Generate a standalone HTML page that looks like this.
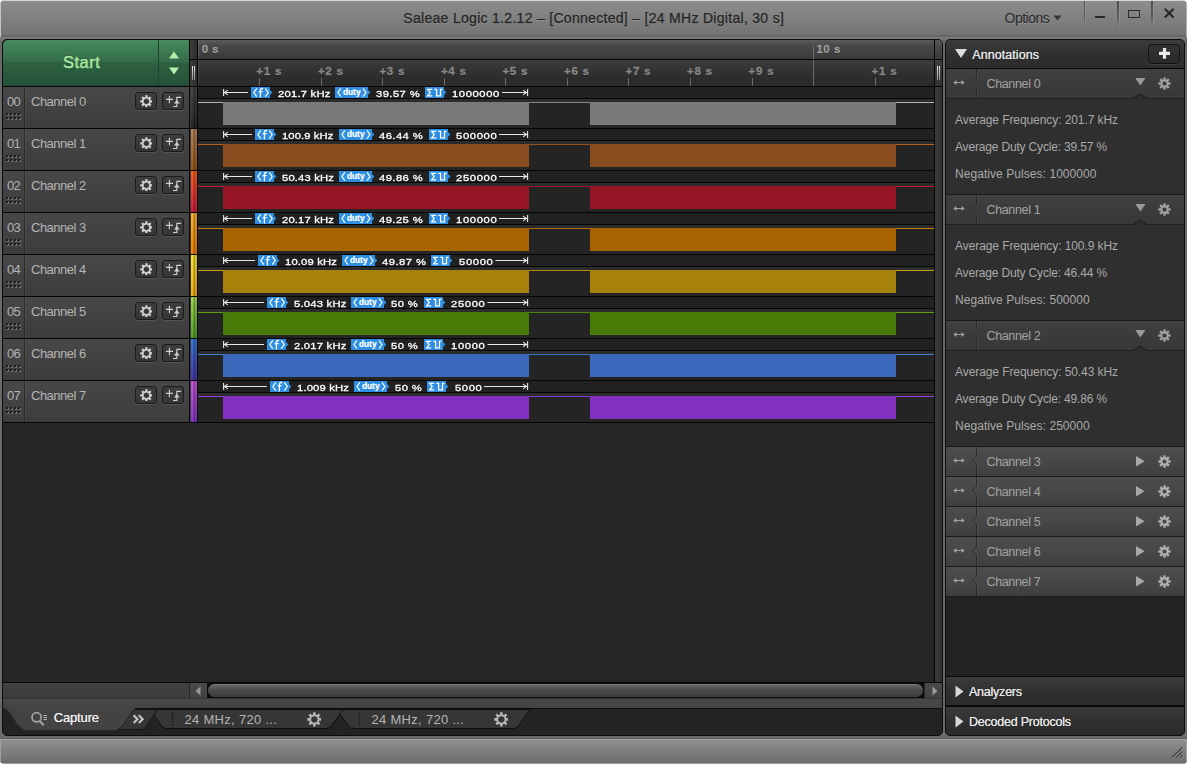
<!DOCTYPE html>
<html><head><meta charset="utf-8"><title>Saleae Logic</title>
<style>
*{box-sizing:border-box;margin:0;padding:0}
html,body{width:1187px;height:764px;overflow:hidden;background:#fff;font-family:"Liberation Sans",sans-serif;}
#win{position:absolute;left:0;top:0;width:1187px;height:764px;border-radius:5px 5px 4px 4px;overflow:hidden;
 background:linear-gradient(#8f8f8f 0px,#8c8c8c 2px,#747474 35px,#585858 36px,#787878 37px,#787878 39px,#6a6a6a 40px,#6a6a6a 737.5px,#5e5e5e 738px,#5e5e5e 739px,#a4a4a4 739px,#a4a4a4 740px,#8f8f8f 740px,#6e6e6e 762.5px,#9c9c9c 763px,#9c9c9c 764px);}
.abs,.t{position:absolute}
.t{white-space:nowrap;line-height:1}
#edgeL{left:0;top:3px;width:1px;height:34px;background:#c6c6c6}
#edgeL2{left:0;top:739px;width:1px;height:22px;background:#a0a0a0}
#edgeR2{left:1186px;top:739px;width:1px;height:22px;background:#a0a0a0}
#edgeR{left:1186px;top:3px;width:1px;height:34px;background:#b0b0b0}
#edgeT{left:3px;top:0;width:1181px;height:1px;background:#d6d6d6}
/* title */
.title{color:#242424;font-size:14px;-webkit-text-stroke:.25px #242424;text-shadow:0 1px 0 rgba(255,255,255,.18)}
.opt{color:#2a2a2a;font-size:14px;text-shadow:0 1px 0 rgba(255,255,255,.18)}
.tsep{top:1px;width:1.3px;height:26px;background:linear-gradient(rgba(70,70,70,.95),rgba(70,70,70,.6) 60%,rgba(70,70,70,0));box-shadow:1px 0 0 rgba(255,255,255,.10)}
/* main panel */
#main{left:2px;top:39px;width:941px;height:697px;background:#262626;border:1px solid #0c0c0c;border-radius:5px;overflow:hidden}
#side{left:945px;top:39px;width:240px;height:697px;background:#232323;border:1px solid #0c0c0c;border-radius:5px;overflow:hidden}

.tabt{color:#b4b4b4;font-size:13px}
.capt{color:#ededed;font-size:13px;text-shadow:0 0 .5px #ededed}
/* ---- main panel ---- */
#start{left:0;top:0;width:155px;height:46px;background:linear-gradient(#4a9163 0px,#458a5d 1px,#3c7a51 12px,#33694a 22px,#2d5f40 23px,#2a5a3c 34px,#25523a 45px,#1d3f2c 46px);border-radius:5px 0 0 0}
#start2{left:156px;top:0;width:30px;height:46px;background:linear-gradient(#4a9163 0px,#458a5d 1px,#3c7a51 12px,#33694a 22px,#2d5f40 23px,#2a5a3c 34px,#25523a 45px,#1d3f2c 46px)}
#startsep{left:155px;top:0;width:1px;height:46px;background:#1f4530}
.startt{color:#a9e8a2;font-size:16.5px;-webkit-text-stroke:.45px #a9e8a2;text-shadow:0 -1px 0 rgba(0,0,0,.35)}
.blk{background:#050505}
#gut{left:187px;top:0;width:7px;height:383px;background:linear-gradient(90deg,#3d3d3d,#2c2c2c)}
#hdr1{left:195px;top:0;width:736px;height:19px;background:linear-gradient(#5c5c5c,#484848 30%,#3a3a3a)}
#hdr2{left:195px;top:20px;width:736px;height:26px;background:linear-gradient(#3c3c3c,#2e2e2e 60%,#2a2a2a)}
.hl{border-left:1px solid rgba(255,255,255,.13)}
.tk1{color:#9e9e9e;font-size:11.5px;-webkit-text-stroke:.3px #9e9e9e;font-weight:bold;text-shadow:0 1px 0 rgba(0,0,0,.5)}
.tk2{color:#888;font-size:11.5px;-webkit-text-stroke:.3px #888;font-weight:bold;text-shadow:0 1px 0 rgba(0,0,0,.5)}
.tick{width:1px;background:#6a6a6a}
#rgut{left:932px;top:0;width:8px;height:643px;background:linear-gradient(90deg,#3a3a3a,#2f2f2f)}
.row{left:0;width:186px;height:41px;background:linear-gradient(#484848,#434343 40%,#3c3c3c)}
.num{color:#b2b2b2;font-size:13px}
.chn{color:#b4b4b4;font-size:13px}
.btn{width:21.5px;height:17.3px;background:linear-gradient(#3d3d3d,#353535);border:1px solid #1b1b1b;border-radius:3px;box-shadow:0 1px 0 rgba(255,255,255,.10)}
.ann{left:195px;width:736px;height:11px;background:#212121}
.wav{left:195px;width:736px;height:29px;background:linear-gradient(#2c2c2c 0,#2c2c2c 3px,#242424 3px)}
.at{color:#fff;font-size:9.7px;-webkit-text-stroke:.3px #fff}
.tag{height:11px;background:#2f8fe2}

/* ---- side panel ---- */
.shdr{left:0;width:238px;background:linear-gradient(#3b3b3b,#303030 50%,#2b2b2b)}
.sh{color:#e6e6e6;font-size:12.5px;text-shadow:0 0 .25px #e6e6e6}
.crow{left:0;width:238px;height:29px;background:linear-gradient(#404040,#3b3b3b 50%,#383838)}
.crow2{left:0;width:238px;height:29px;background:linear-gradient(#4d4d4d,#474747 50%,#3f3f3f)}
.cn{color:#a3a3a3;font-size:12.5px}
.cbody{left:0;width:238px;height:96px;background:#2f2f2f}
.ct{color:#a9a9a9;font-size:12px}
#plus{left:201.8px;top:3.5px;width:31.8px;height:20px;background:linear-gradient(#323232,#292929);border:1px solid #141414;border-radius:4px;box-shadow:0 1px 0 rgba(255,255,255,.09)}
</style></head>
<body>
<div id="win">
<div class="abs" id="edgeT"></div><div class="abs" id="edgeL"></div><div class="abs" id="edgeL2"></div><div class="abs" id="edgeR"></div><div class="abs" id="edgeR2"></div>
<span class="t title" style="left:403.3px;top:11px;letter-spacing:0.3px;">Saleae Logic 1.2.12 – [Connected] – [24 MHz Digital, 30 s]</span>
<span class="t opt" style="left:1004.5px;top:10.7px;letter-spacing:-0.51px;">Options</span>
<svg class="abs" style="left:1053px;top:15px" width="10" height="6"><path d="M0.5 0.5h8l-4 5z" fill="#333"/></svg>
<div class="abs tsep" style="left:1083.5px"></div>
<div class="abs tsep" style="left:1117.3px"></div>
<div class="abs tsep" style="left:1151.3px"></div>
<div class="abs" style="left:1095px;top:15.8px;width:10.1px;height:2.3px;background:#282828"></div>
<div class="abs" style="left:1128px;top:9.9px;width:12.1px;height:8.2px;border:1.5px solid #2a2a2a"></div>
<svg class="abs" style="left:1163px;top:7px" width="13" height="13"><path d="M1.8 1.7l8.8 8.8M10.6 1.7l-8.8 8.8" stroke="#262626" stroke-width="2" stroke-linecap="butt"/></svg>
<div class="abs" id="main">
<div class="abs" id="start"></div><div class="abs" id="startsep"></div><div class="abs" id="start2"></div>
<span class="t startt" style="left:60px;top:14px;letter-spacing:0.49px;">Start</span>
<svg class="abs" style="left:165px;top:11px" width="12" height="24"><path d="M6 0.5L11 7.5H1z M6 23.5L11 16.5H1z" fill="#b4eeae"/></svg>
<div class="abs blk" style="left:186px;top:0px;width:1.8px;height:383px;"></div>
<div class="abs" id="gut"></div>
<div class="abs blk" style="left:194px;top:0px;width:1px;height:383px;"></div>
<div class="abs" id="hdr1"></div><div class="abs" id="hdr2"></div>
<div class="abs blk" style="left:186px;top:19px;width:754px;height:1px;"></div>
<div class="abs blk" style="left:0px;top:46px;width:940px;height:1px;"></div>
<div class="abs " style="left:195px;top:0px;width:1px;height:19px;background:rgba(255,255,255,.12)"></div>
<div class="abs " style="left:195px;top:20px;width:1px;height:25px;background:rgba(255,255,255,.10)"></div>
<span class="t tk1" style="left:198.7px;top:3.700000000000003px;letter-spacing:0.42px;">0 s</span>
<span class="t tk1" style="left:813.5px;top:3.700000000000003px;letter-spacing:0.47px;">10 s</span>
<div class="abs " style="left:810px;top:2px;width:1.1px;height:17px;background:linear-gradient(rgba(112,112,112,0),#707070 50%)"></div>
<div class="abs " style="left:810px;top:20px;width:1.1px;height:26px;background:#6a6a6a"></div>
<div class="abs tick" style="left:256.2px;top:38px;width:1px;height:7.6px;"></div>
<span class="t tk2" style="left:253.3px;top:25.700000000000003px;letter-spacing:0.76px;">+1 s</span>
<div class="abs tick" style="left:317.8px;top:38px;width:1px;height:7.6px;"></div>
<span class="t tk2" style="left:314.9px;top:25.700000000000003px;letter-spacing:0.76px;">+2 s</span>
<div class="abs tick" style="left:379.3px;top:38px;width:1px;height:7.6px;"></div>
<span class="t tk2" style="left:376.4px;top:25.700000000000003px;letter-spacing:0.76px;">+3 s</span>
<div class="abs tick" style="left:440.8px;top:38px;width:1px;height:7.6px;"></div>
<span class="t tk2" style="left:437.9px;top:25.700000000000003px;letter-spacing:0.76px;">+4 s</span>
<div class="abs tick" style="left:502.3px;top:38px;width:1px;height:7.6px;"></div>
<span class="t tk2" style="left:499.4px;top:25.700000000000003px;letter-spacing:0.76px;">+5 s</span>
<div class="abs tick" style="left:563.9px;top:38px;width:1px;height:7.6px;"></div>
<span class="t tk2" style="left:561.0px;top:25.700000000000003px;letter-spacing:0.76px;">+6 s</span>
<div class="abs tick" style="left:625.4px;top:38px;width:1px;height:7.6px;"></div>
<span class="t tk2" style="left:622.5px;top:25.700000000000003px;letter-spacing:0.76px;">+7 s</span>
<div class="abs tick" style="left:686.9px;top:38px;width:1px;height:7.6px;"></div>
<span class="t tk2" style="left:684.0px;top:25.700000000000003px;letter-spacing:0.76px;">+8 s</span>
<div class="abs tick" style="left:748.5px;top:38px;width:1px;height:7.6px;"></div>
<span class="t tk2" style="left:745.6px;top:25.700000000000003px;letter-spacing:0.76px;">+9 s</span>
<div class="abs tick" style="left:871.5px;top:38px;width:1px;height:7.6px;"></div>
<span class="t tk2" style="left:868.6px;top:25.700000000000003px;letter-spacing:0.76px;">+1 s</span>
<div class="abs " style="left:189px;top:26px;width:1px;height:14px;background:linear-gradient(#e8e8e8,#8a8a8a)"></div>
<div class="abs " style="left:191px;top:26px;width:1px;height:14px;background:linear-gradient(#e8e8e8,#8a8a8a)"></div>
<div class="abs " style="left:934px;top:26px;width:1px;height:14px;background:linear-gradient(#e8e8e8,#8a8a8a)"></div>
<div class="abs " style="left:936px;top:26px;width:1px;height:14px;background:linear-gradient(#e8e8e8,#8a8a8a)"></div>
<div class="abs blk" style="left:931px;top:0px;width:1px;height:643px;"></div>
<div class="abs" id="rgut"></div>
<div class="abs " style="left:932px;top:0px;width:8px;height:19px;background:linear-gradient(#565656,#383838)"></div>
<div class="abs " style="left:932px;top:20px;width:8px;height:26px;background:linear-gradient(#3e3e3e,#323232)"></div>
<div class="abs blk" style="left:931px;top:19px;width:9px;height:1px;"></div>
<div class="abs blk" style="left:931px;top:46px;width:9px;height:1px;"></div>
<div class="abs " style="left:934px;top:26px;width:1px;height:14px;background:linear-gradient(#e8e8e8,#8a8a8a)"></div>
<div class="abs " style="left:936px;top:26px;width:1px;height:14px;background:linear-gradient(#e8e8e8,#8a8a8a)"></div>
<div class="abs blk" style="left:0px;top:46px;width:186px;height:1px;"></div>
<div class="abs blk" style="left:186px;top:45.8px;width:745px;height:1.6px;"></div>
<div class="abs row" style="top:47px"></div>
<div class="abs " style="left:21px;top:47px;width:1px;height:41px;background:#2b2b2b"></div>
<div class="abs " style="left:22px;top:47px;width:1px;height:41px;background:rgba(255,255,255,.05)"></div>
<span class="t num" style="left:4px;top:55.3px;letter-spacing:-0.69px;">00</span>
<div class="abs " style="left:3px;top:73px;width:1.8px;height:1.8px;background:#1e1e1e;box-shadow:1px 1px 0 #747474"></div>
<div class="abs " style="left:7px;top:73px;width:1.8px;height:1.8px;background:#1e1e1e;box-shadow:1px 1px 0 #747474"></div>
<div class="abs " style="left:11px;top:73px;width:1.8px;height:1.8px;background:#1e1e1e;box-shadow:1px 1px 0 #747474"></div>
<div class="abs " style="left:15px;top:73px;width:1.8px;height:1.8px;background:#1e1e1e;box-shadow:1px 1px 0 #747474"></div>
<div class="abs " style="left:3px;top:77px;width:1.8px;height:1.8px;background:#1e1e1e;box-shadow:1px 1px 0 #747474"></div>
<div class="abs " style="left:7px;top:77px;width:1.8px;height:1.8px;background:#1e1e1e;box-shadow:1px 1px 0 #747474"></div>
<div class="abs " style="left:11px;top:77px;width:1.8px;height:1.8px;background:#1e1e1e;box-shadow:1px 1px 0 #747474"></div>
<div class="abs " style="left:15px;top:77px;width:1.8px;height:1.8px;background:#1e1e1e;box-shadow:1px 1px 0 #747474"></div>
<span class="t chn" style="left:28px;top:55.3px;letter-spacing:-0.51px;">Channel 0</span>
<div class="abs btn" style="left:132.1px;top:52.3px"></div>
<div class="abs btn" style="left:159.1px;top:52.3px"></div>
<svg class="abs" style="left:136.66px;top:54.61px" width="12.78" height="12.78" viewBox="-8 -8 16 16"><g fill="#d2d2d2"><rect x="-1.4" y="-7.7" width="2.8" height="3.4" rx=".3" transform="rotate(0)"/><rect x="-1.4" y="-7.7" width="2.8" height="3.4" rx=".3" transform="rotate(45)"/><rect x="-1.4" y="-7.7" width="2.8" height="3.4" rx=".3" transform="rotate(90)"/><rect x="-1.4" y="-7.7" width="2.8" height="3.4" rx=".3" transform="rotate(135)"/><rect x="-1.4" y="-7.7" width="2.8" height="3.4" rx=".3" transform="rotate(180)"/><rect x="-1.4" y="-7.7" width="2.8" height="3.4" rx=".3" transform="rotate(225)"/><rect x="-1.4" y="-7.7" width="2.8" height="3.4" rx=".3" transform="rotate(270)"/><rect x="-1.4" y="-7.7" width="2.8" height="3.4" rx=".3" transform="rotate(315)"/></g><circle r="4.55" fill="none" stroke="#d2d2d2" stroke-width="2.05"/></svg>
<svg class="abs" style="left:160px;top:52px" width="21" height="17" viewBox="163 6 21 17"><path d="M165.9 13.4h7.1M169.4 9.8v7.4" stroke="#d0d0d0" stroke-width="1.12" fill="none"/><path d="M173 20.5h3.8v-9.1h4.3" stroke="#d0d0d0" stroke-width="1.12" fill="none"/><path d="M173.8 17.4l3-3.5 3 3.5z" fill="#d0d0d0"/></svg>
<div class="abs " style="left:187.8px;top:47px;width:6.4px;height:41px;background:linear-gradient(90deg,rgba(0,0,0,0) 38%,rgba(0,0,0,.38) 46%,rgba(0,0,0,.38) 56%,rgba(0,0,0,.14) 64%),linear-gradient(#484848,#262626)"></div>
<div class="abs ann" style="top:47px"></div>
<div class="abs wav" style="top:59px"></div>
<div class="abs blk" style="left:195px;top:57.8px;width:736px;height:1.4px;"></div>
<div class="abs " style="left:195px;top:62px;width:25px;height:1.1px;background:#b0b0b0"></div>
<div class="abs " style="left:526px;top:62px;width:61px;height:1.1px;background:#7a7a7a;filter:brightness(1.07)"></div>
<div class="abs " style="left:893px;top:62px;width:38px;height:1.1px;background:#b0b0b0"></div>
<div class="abs " style="left:220px;top:62px;width:306px;height:23px;background:#7a7a7a"></div>
<div class="abs " style="left:587px;top:62px;width:306px;height:23px;background:#7a7a7a"></div>
<svg class="abs" style="left:195px;top:47px" width="736" height="12"><path d="M25.6 2v7M26 5.5H50M29.8 3.1L26.5 5.5l3.3 2.4" stroke="#e8e8e8" stroke-width="1.1" fill="none"/><path d="M329.6 2v7M329 5.5H304.0M325.2 3.1L328.5 5.5l-3.3 2.4" stroke="#e8e8e8" stroke-width="1.1" fill="none"/></svg>
<svg class="abs" style="left:248px;top:47.0px" width="22" height="10.9" viewBox="0 0 22 11" preserveAspectRatio="none"><path d="M0 0H19V3L21.4 5.5L19 8V11H0z" fill="#2f8fe2"/><path d="M5.8 1.4L2.8 5.6L5.8 9.8M14.3 1.4L17.3 5.6L14.3 9.8" stroke="#fff" stroke-width="1.15" fill="none"/><path d="M9.4 10.6V3.4q0-1.9 1.7-1.9h1M7.7 4.6h3.9" stroke="#fff" stroke-width="1.3" fill="none"/></svg>
<svg class="abs" style="left:332px;top:47.0px" width="36" height="10.9" viewBox="0 0 36 11" preserveAspectRatio="none"><path d="M0 0H33V3L35.4 5.5L33 8V11H0z" fill="#2f8fe2"/><path d="M5.9 1.4L2.9 5.6L5.9 9.8M28 1.4L31 5.6L28 9.8" stroke="#fff" stroke-width="1.15" fill="none"/><text x="8" y="8.5" font-family="Liberation Sans"  font-size="9.2" font-weight="bold" fill="#fff" stroke="#fff" stroke-width=".25" textLength="17.5" lengthAdjust="spacingAndGlyphs">duty</text></svg>
<svg class="abs" style="left:422.0px;top:47.0px" width="22" height="10.9" viewBox="0 0 22 11" preserveAspectRatio="none"><path d="M0 0H19V3L21.4 5.5L19 8V11H0z" fill="#2f8fe2"/><path d="M7.2 2.3H2.7L5.2 5.6L2.7 8.9H7.2" stroke="#fff" stroke-width="1.3" fill="none"/><path d="M9.3 2.3h2.3v6.6h3.9V2.3h2" stroke="#fff" stroke-width="1.3" fill="none"/></svg>
<span class="t at" style="left:274.5px;top:49.099999999999994px;letter-spacing:0.19px;transform:scaleX(1.16);transform-origin:0 0;">201.7 kHz</span>
<span class="t at" style="left:372.5px;top:49.099999999999994px;letter-spacing:0.37px;transform:scaleX(1.16);transform-origin:0 0;">39.57 %</span>
<span class="t at" style="left:449px;top:49.099999999999994px;letter-spacing:0.5px;transform:scaleX(1.16);transform-origin:0 0;">1000000</span>
<div class="abs blk" style="left:0px;top:88px;width:186px;height:1px;"></div>
<div class="abs blk" style="left:186px;top:87.8px;width:745px;height:1.6px;"></div>
<div class="abs row" style="top:89px"></div>
<div class="abs " style="left:21px;top:89px;width:1px;height:41px;background:#2b2b2b"></div>
<div class="abs " style="left:22px;top:89px;width:1px;height:41px;background:rgba(255,255,255,.05)"></div>
<span class="t num" style="left:4px;top:97.30000000000001px;letter-spacing:-0.69px;">01</span>
<div class="abs " style="left:3px;top:115px;width:1.8px;height:1.8px;background:#1e1e1e;box-shadow:1px 1px 0 #747474"></div>
<div class="abs " style="left:7px;top:115px;width:1.8px;height:1.8px;background:#1e1e1e;box-shadow:1px 1px 0 #747474"></div>
<div class="abs " style="left:11px;top:115px;width:1.8px;height:1.8px;background:#1e1e1e;box-shadow:1px 1px 0 #747474"></div>
<div class="abs " style="left:15px;top:115px;width:1.8px;height:1.8px;background:#1e1e1e;box-shadow:1px 1px 0 #747474"></div>
<div class="abs " style="left:3px;top:119px;width:1.8px;height:1.8px;background:#1e1e1e;box-shadow:1px 1px 0 #747474"></div>
<div class="abs " style="left:7px;top:119px;width:1.8px;height:1.8px;background:#1e1e1e;box-shadow:1px 1px 0 #747474"></div>
<div class="abs " style="left:11px;top:119px;width:1.8px;height:1.8px;background:#1e1e1e;box-shadow:1px 1px 0 #747474"></div>
<div class="abs " style="left:15px;top:119px;width:1.8px;height:1.8px;background:#1e1e1e;box-shadow:1px 1px 0 #747474"></div>
<span class="t chn" style="left:28px;top:97.30000000000001px;letter-spacing:-0.51px;">Channel 1</span>
<div class="abs btn" style="left:132.1px;top:94.30000000000001px"></div>
<div class="abs btn" style="left:159.1px;top:94.30000000000001px"></div>
<svg class="abs" style="left:136.66px;top:96.61px" width="12.78" height="12.78" viewBox="-8 -8 16 16"><g fill="#d2d2d2"><rect x="-1.4" y="-7.7" width="2.8" height="3.4" rx=".3" transform="rotate(0)"/><rect x="-1.4" y="-7.7" width="2.8" height="3.4" rx=".3" transform="rotate(45)"/><rect x="-1.4" y="-7.7" width="2.8" height="3.4" rx=".3" transform="rotate(90)"/><rect x="-1.4" y="-7.7" width="2.8" height="3.4" rx=".3" transform="rotate(135)"/><rect x="-1.4" y="-7.7" width="2.8" height="3.4" rx=".3" transform="rotate(180)"/><rect x="-1.4" y="-7.7" width="2.8" height="3.4" rx=".3" transform="rotate(225)"/><rect x="-1.4" y="-7.7" width="2.8" height="3.4" rx=".3" transform="rotate(270)"/><rect x="-1.4" y="-7.7" width="2.8" height="3.4" rx=".3" transform="rotate(315)"/></g><circle r="4.55" fill="none" stroke="#d2d2d2" stroke-width="2.05"/></svg>
<svg class="abs" style="left:160px;top:94px" width="21" height="17" viewBox="163 6 21 17"><path d="M165.9 13.4h7.1M169.4 9.8v7.4" stroke="#d0d0d0" stroke-width="1.12" fill="none"/><path d="M173 20.5h3.8v-9.1h4.3" stroke="#d0d0d0" stroke-width="1.12" fill="none"/><path d="M173.8 17.4l3-3.5 3 3.5z" fill="#d0d0d0"/></svg>
<div class="abs " style="left:187.8px;top:89px;width:6.4px;height:41px;background:linear-gradient(90deg,rgba(0,0,0,0) 38%,rgba(0,0,0,.38) 46%,rgba(0,0,0,.38) 56%,rgba(0,0,0,.14) 64%),linear-gradient(#b4845c,#9a5a18)"></div>
<div class="abs ann" style="top:89px"></div>
<div class="abs wav" style="top:101px"></div>
<div class="abs blk" style="left:195px;top:99.80000000000001px;width:736px;height:1.4px;"></div>
<div class="abs " style="left:195px;top:104px;width:25px;height:1.1px;background:#b8601c"></div>
<div class="abs " style="left:526px;top:104px;width:61px;height:1.1px;background:#894c1e;filter:brightness(1.07)"></div>
<div class="abs " style="left:893px;top:104px;width:38px;height:1.1px;background:#b8601c"></div>
<div class="abs " style="left:220px;top:104px;width:306px;height:23px;background:#894c1e"></div>
<div class="abs " style="left:587px;top:104px;width:306px;height:23px;background:#894c1e"></div>
<svg class="abs" style="left:195px;top:89px" width="736" height="12"><path d="M25.6 2v7M26 5.5H54M29.8 3.1L26.5 5.5l3.3 2.4" stroke="#e8e8e8" stroke-width="1.1" fill="none"/><path d="M329.6 2v7M329 5.5H301.0M325.2 3.1L328.5 5.5l-3.3 2.4" stroke="#e8e8e8" stroke-width="1.1" fill="none"/></svg>
<svg class="abs" style="left:252px;top:89.0px" width="22" height="10.9" viewBox="0 0 22 11" preserveAspectRatio="none"><path d="M0 0H19V3L21.4 5.5L19 8V11H0z" fill="#2f8fe2"/><path d="M5.8 1.4L2.8 5.6L5.8 9.8M14.3 1.4L17.3 5.6L14.3 9.8" stroke="#fff" stroke-width="1.15" fill="none"/><path d="M9.4 10.6V3.4q0-1.9 1.7-1.9h1M7.7 4.6h3.9" stroke="#fff" stroke-width="1.3" fill="none"/></svg>
<svg class="abs" style="left:336px;top:89.0px" width="36" height="10.9" viewBox="0 0 36 11" preserveAspectRatio="none"><path d="M0 0H33V3L35.4 5.5L33 8V11H0z" fill="#2f8fe2"/><path d="M5.9 1.4L2.9 5.6L5.9 9.8M28 1.4L31 5.6L28 9.8" stroke="#fff" stroke-width="1.15" fill="none"/><text x="8" y="8.5" font-family="Liberation Sans"  font-size="9.2" font-weight="bold" fill="#fff" stroke="#fff" stroke-width=".25" textLength="17.5" lengthAdjust="spacingAndGlyphs">duty</text></svg>
<svg class="abs" style="left:425.5px;top:89.0px" width="22" height="10.9" viewBox="0 0 22 11" preserveAspectRatio="none"><path d="M0 0H19V3L21.4 5.5L19 8V11H0z" fill="#2f8fe2"/><path d="M7.2 2.3H2.7L5.2 5.6L2.7 8.9H7.2" stroke="#fff" stroke-width="1.3" fill="none"/><path d="M9.3 2.3h2.3v6.6h3.9V2.3h2" stroke="#fff" stroke-width="1.3" fill="none"/></svg>
<span class="t at" style="left:279px;top:91.1px;letter-spacing:0.09px;transform:scaleX(1.16);transform-origin:0 0;">100.9 kHz</span>
<span class="t at" style="left:376px;top:91.1px;letter-spacing:0.37px;transform:scaleX(1.16);transform-origin:0 0;">46.44 %</span>
<span class="t at" style="left:452.5px;top:91.1px;letter-spacing:0.56px;transform:scaleX(1.16);transform-origin:0 0;">500000</span>
<div class="abs blk" style="left:0px;top:130px;width:186px;height:1px;"></div>
<div class="abs blk" style="left:186px;top:129.8px;width:745px;height:1.6px;"></div>
<div class="abs row" style="top:131px"></div>
<div class="abs " style="left:21px;top:131px;width:1px;height:41px;background:#2b2b2b"></div>
<div class="abs " style="left:22px;top:131px;width:1px;height:41px;background:rgba(255,255,255,.05)"></div>
<span class="t num" style="left:4px;top:139.3px;letter-spacing:-0.69px;">02</span>
<div class="abs " style="left:3px;top:157px;width:1.8px;height:1.8px;background:#1e1e1e;box-shadow:1px 1px 0 #747474"></div>
<div class="abs " style="left:7px;top:157px;width:1.8px;height:1.8px;background:#1e1e1e;box-shadow:1px 1px 0 #747474"></div>
<div class="abs " style="left:11px;top:157px;width:1.8px;height:1.8px;background:#1e1e1e;box-shadow:1px 1px 0 #747474"></div>
<div class="abs " style="left:15px;top:157px;width:1.8px;height:1.8px;background:#1e1e1e;box-shadow:1px 1px 0 #747474"></div>
<div class="abs " style="left:3px;top:161px;width:1.8px;height:1.8px;background:#1e1e1e;box-shadow:1px 1px 0 #747474"></div>
<div class="abs " style="left:7px;top:161px;width:1.8px;height:1.8px;background:#1e1e1e;box-shadow:1px 1px 0 #747474"></div>
<div class="abs " style="left:11px;top:161px;width:1.8px;height:1.8px;background:#1e1e1e;box-shadow:1px 1px 0 #747474"></div>
<div class="abs " style="left:15px;top:161px;width:1.8px;height:1.8px;background:#1e1e1e;box-shadow:1px 1px 0 #747474"></div>
<span class="t chn" style="left:28px;top:139.3px;letter-spacing:-0.51px;">Channel 2</span>
<div class="abs btn" style="left:132.1px;top:136.3px"></div>
<div class="abs btn" style="left:159.1px;top:136.3px"></div>
<svg class="abs" style="left:136.66px;top:138.61px" width="12.78" height="12.78" viewBox="-8 -8 16 16"><g fill="#d2d2d2"><rect x="-1.4" y="-7.7" width="2.8" height="3.4" rx=".3" transform="rotate(0)"/><rect x="-1.4" y="-7.7" width="2.8" height="3.4" rx=".3" transform="rotate(45)"/><rect x="-1.4" y="-7.7" width="2.8" height="3.4" rx=".3" transform="rotate(90)"/><rect x="-1.4" y="-7.7" width="2.8" height="3.4" rx=".3" transform="rotate(135)"/><rect x="-1.4" y="-7.7" width="2.8" height="3.4" rx=".3" transform="rotate(180)"/><rect x="-1.4" y="-7.7" width="2.8" height="3.4" rx=".3" transform="rotate(225)"/><rect x="-1.4" y="-7.7" width="2.8" height="3.4" rx=".3" transform="rotate(270)"/><rect x="-1.4" y="-7.7" width="2.8" height="3.4" rx=".3" transform="rotate(315)"/></g><circle r="4.55" fill="none" stroke="#d2d2d2" stroke-width="2.05"/></svg>
<svg class="abs" style="left:160px;top:136px" width="21" height="17" viewBox="163 6 21 17"><path d="M165.9 13.4h7.1M169.4 9.8v7.4" stroke="#d0d0d0" stroke-width="1.12" fill="none"/><path d="M173 20.5h3.8v-9.1h4.3" stroke="#d0d0d0" stroke-width="1.12" fill="none"/><path d="M173.8 17.4l3-3.5 3 3.5z" fill="#d0d0d0"/></svg>
<div class="abs " style="left:187.8px;top:131px;width:6.4px;height:41px;background:linear-gradient(90deg,rgba(0,0,0,0) 38%,rgba(0,0,0,.38) 46%,rgba(0,0,0,.38) 56%,rgba(0,0,0,.14) 64%),linear-gradient(#ff6220,#d21c40)"></div>
<div class="abs ann" style="top:131px"></div>
<div class="abs wav" style="top:143px"></div>
<div class="abs blk" style="left:195px;top:141.8px;width:736px;height:1.4px;"></div>
<div class="abs " style="left:195px;top:146px;width:25px;height:1.1px;background:#c41a30"></div>
<div class="abs " style="left:526px;top:146px;width:61px;height:1.1px;background:#981427;filter:brightness(1.07)"></div>
<div class="abs " style="left:893px;top:146px;width:38px;height:1.1px;background:#c41a30"></div>
<div class="abs " style="left:220px;top:146px;width:306px;height:23px;background:#981427"></div>
<div class="abs " style="left:587px;top:146px;width:306px;height:23px;background:#981427"></div>
<svg class="abs" style="left:195px;top:131px" width="736" height="12"><path d="M25.6 2v7M26 5.5H54M29.8 3.1L26.5 5.5l3.3 2.4" stroke="#e8e8e8" stroke-width="1.1" fill="none"/><path d="M329.6 2v7M329 5.5H301.0M325.2 3.1L328.5 5.5l-3.3 2.4" stroke="#e8e8e8" stroke-width="1.1" fill="none"/></svg>
<svg class="abs" style="left:252px;top:131.0px" width="22" height="10.9" viewBox="0 0 22 11" preserveAspectRatio="none"><path d="M0 0H19V3L21.4 5.5L19 8V11H0z" fill="#2f8fe2"/><path d="M5.8 1.4L2.8 5.6L5.8 9.8M14.3 1.4L17.3 5.6L14.3 9.8" stroke="#fff" stroke-width="1.15" fill="none"/><path d="M9.4 10.6V3.4q0-1.9 1.7-1.9h1M7.7 4.6h3.9" stroke="#fff" stroke-width="1.3" fill="none"/></svg>
<svg class="abs" style="left:336px;top:131.0px" width="36" height="10.9" viewBox="0 0 36 11" preserveAspectRatio="none"><path d="M0 0H33V3L35.4 5.5L33 8V11H0z" fill="#2f8fe2"/><path d="M5.9 1.4L2.9 5.6L5.9 9.8M28 1.4L31 5.6L28 9.8" stroke="#fff" stroke-width="1.15" fill="none"/><text x="8" y="8.5" font-family="Liberation Sans"  font-size="9.2" font-weight="bold" fill="#fff" stroke="#fff" stroke-width=".25" textLength="17.5" lengthAdjust="spacingAndGlyphs">duty</text></svg>
<svg class="abs" style="left:425.5px;top:131.0px" width="22" height="10.9" viewBox="0 0 22 11" preserveAspectRatio="none"><path d="M0 0H19V3L21.4 5.5L19 8V11H0z" fill="#2f8fe2"/><path d="M7.2 2.3H2.7L5.2 5.6L2.7 8.9H7.2" stroke="#fff" stroke-width="1.3" fill="none"/><path d="M9.3 2.3h2.3v6.6h3.9V2.3h2" stroke="#fff" stroke-width="1.3" fill="none"/></svg>
<span class="t at" style="left:278.5px;top:133.1px;letter-spacing:0.14px;transform:scaleX(1.16);transform-origin:0 0;">50.43 kHz</span>
<span class="t at" style="left:376px;top:133.1px;letter-spacing:0.37px;transform:scaleX(1.16);transform-origin:0 0;">49.86 %</span>
<span class="t at" style="left:452.5px;top:133.1px;letter-spacing:0.56px;transform:scaleX(1.16);transform-origin:0 0;">250000</span>
<div class="abs blk" style="left:0px;top:172px;width:186px;height:1px;"></div>
<div class="abs blk" style="left:186px;top:171.8px;width:745px;height:1.6px;"></div>
<div class="abs row" style="top:173px"></div>
<div class="abs " style="left:21px;top:173px;width:1px;height:41px;background:#2b2b2b"></div>
<div class="abs " style="left:22px;top:173px;width:1px;height:41px;background:rgba(255,255,255,.05)"></div>
<span class="t num" style="left:4px;top:181.3px;letter-spacing:-0.69px;">03</span>
<div class="abs " style="left:3px;top:199px;width:1.8px;height:1.8px;background:#1e1e1e;box-shadow:1px 1px 0 #747474"></div>
<div class="abs " style="left:7px;top:199px;width:1.8px;height:1.8px;background:#1e1e1e;box-shadow:1px 1px 0 #747474"></div>
<div class="abs " style="left:11px;top:199px;width:1.8px;height:1.8px;background:#1e1e1e;box-shadow:1px 1px 0 #747474"></div>
<div class="abs " style="left:15px;top:199px;width:1.8px;height:1.8px;background:#1e1e1e;box-shadow:1px 1px 0 #747474"></div>
<div class="abs " style="left:3px;top:203px;width:1.8px;height:1.8px;background:#1e1e1e;box-shadow:1px 1px 0 #747474"></div>
<div class="abs " style="left:7px;top:203px;width:1.8px;height:1.8px;background:#1e1e1e;box-shadow:1px 1px 0 #747474"></div>
<div class="abs " style="left:11px;top:203px;width:1.8px;height:1.8px;background:#1e1e1e;box-shadow:1px 1px 0 #747474"></div>
<div class="abs " style="left:15px;top:203px;width:1.8px;height:1.8px;background:#1e1e1e;box-shadow:1px 1px 0 #747474"></div>
<span class="t chn" style="left:28px;top:181.3px;letter-spacing:-0.51px;">Channel 3</span>
<div class="abs btn" style="left:132.1px;top:178.3px"></div>
<div class="abs btn" style="left:159.1px;top:178.3px"></div>
<svg class="abs" style="left:136.66px;top:180.61px" width="12.78" height="12.78" viewBox="-8 -8 16 16"><g fill="#d2d2d2"><rect x="-1.4" y="-7.7" width="2.8" height="3.4" rx=".3" transform="rotate(0)"/><rect x="-1.4" y="-7.7" width="2.8" height="3.4" rx=".3" transform="rotate(45)"/><rect x="-1.4" y="-7.7" width="2.8" height="3.4" rx=".3" transform="rotate(90)"/><rect x="-1.4" y="-7.7" width="2.8" height="3.4" rx=".3" transform="rotate(135)"/><rect x="-1.4" y="-7.7" width="2.8" height="3.4" rx=".3" transform="rotate(180)"/><rect x="-1.4" y="-7.7" width="2.8" height="3.4" rx=".3" transform="rotate(225)"/><rect x="-1.4" y="-7.7" width="2.8" height="3.4" rx=".3" transform="rotate(270)"/><rect x="-1.4" y="-7.7" width="2.8" height="3.4" rx=".3" transform="rotate(315)"/></g><circle r="4.55" fill="none" stroke="#d2d2d2" stroke-width="2.05"/></svg>
<svg class="abs" style="left:160px;top:178px" width="21" height="17" viewBox="163 6 21 17"><path d="M165.9 13.4h7.1M169.4 9.8v7.4" stroke="#d0d0d0" stroke-width="1.12" fill="none"/><path d="M173 20.5h3.8v-9.1h4.3" stroke="#d0d0d0" stroke-width="1.12" fill="none"/><path d="M173.8 17.4l3-3.5 3 3.5z" fill="#d0d0d0"/></svg>
<div class="abs " style="left:187.8px;top:173px;width:6.4px;height:41px;background:linear-gradient(90deg,rgba(0,0,0,0) 38%,rgba(0,0,0,.38) 46%,rgba(0,0,0,.38) 56%,rgba(0,0,0,.14) 64%),linear-gradient(#f8b430,#f08004)"></div>
<div class="abs ann" style="top:173px"></div>
<div class="abs wav" style="top:185px"></div>
<div class="abs blk" style="left:195px;top:183.8px;width:736px;height:1.4px;"></div>
<div class="abs " style="left:195px;top:188px;width:25px;height:1.1px;background:#c87c00"></div>
<div class="abs " style="left:526px;top:188px;width:61px;height:1.1px;background:#a86400;filter:brightness(1.07)"></div>
<div class="abs " style="left:893px;top:188px;width:38px;height:1.1px;background:#c87c00"></div>
<div class="abs " style="left:220px;top:188px;width:306px;height:23px;background:#a86400"></div>
<div class="abs " style="left:587px;top:188px;width:306px;height:23px;background:#a86400"></div>
<svg class="abs" style="left:195px;top:173px" width="736" height="12"><path d="M25.6 2v7M26 5.5H54M29.8 3.1L26.5 5.5l3.3 2.4" stroke="#e8e8e8" stroke-width="1.1" fill="none"/><path d="M329.6 2v7M329 5.5H301.0M325.2 3.1L328.5 5.5l-3.3 2.4" stroke="#e8e8e8" stroke-width="1.1" fill="none"/></svg>
<svg class="abs" style="left:252px;top:173.0px" width="22" height="10.9" viewBox="0 0 22 11" preserveAspectRatio="none"><path d="M0 0H19V3L21.4 5.5L19 8V11H0z" fill="#2f8fe2"/><path d="M5.8 1.4L2.8 5.6L5.8 9.8M14.3 1.4L17.3 5.6L14.3 9.8" stroke="#fff" stroke-width="1.15" fill="none"/><path d="M9.4 10.6V3.4q0-1.9 1.7-1.9h1M7.7 4.6h3.9" stroke="#fff" stroke-width="1.3" fill="none"/></svg>
<svg class="abs" style="left:336px;top:173.0px" width="36" height="10.9" viewBox="0 0 36 11" preserveAspectRatio="none"><path d="M0 0H33V3L35.4 5.5L33 8V11H0z" fill="#2f8fe2"/><path d="M5.9 1.4L2.9 5.6L5.9 9.8M28 1.4L31 5.6L28 9.8" stroke="#fff" stroke-width="1.15" fill="none"/><text x="8" y="8.5" font-family="Liberation Sans"  font-size="9.2" font-weight="bold" fill="#fff" stroke="#fff" stroke-width=".25" textLength="17.5" lengthAdjust="spacingAndGlyphs">duty</text></svg>
<svg class="abs" style="left:425.5px;top:173.0px" width="22" height="10.9" viewBox="0 0 22 11" preserveAspectRatio="none"><path d="M0 0H19V3L21.4 5.5L19 8V11H0z" fill="#2f8fe2"/><path d="M7.2 2.3H2.7L5.2 5.6L2.7 8.9H7.2" stroke="#fff" stroke-width="1.3" fill="none"/><path d="M9.3 2.3h2.3v6.6h3.9V2.3h2" stroke="#fff" stroke-width="1.3" fill="none"/></svg>
<span class="t at" style="left:278.5px;top:175.1px;letter-spacing:0.14px;transform:scaleX(1.16);transform-origin:0 0;">20.17 kHz</span>
<span class="t at" style="left:376px;top:175.1px;letter-spacing:0.37px;transform:scaleX(1.16);transform-origin:0 0;">49.25 %</span>
<span class="t at" style="left:452.5px;top:175.1px;letter-spacing:0.56px;transform:scaleX(1.16);transform-origin:0 0;">100000</span>
<div class="abs blk" style="left:0px;top:214px;width:186px;height:1px;"></div>
<div class="abs blk" style="left:186px;top:213.8px;width:745px;height:1.6px;"></div>
<div class="abs row" style="top:215px"></div>
<div class="abs " style="left:21px;top:215px;width:1px;height:41px;background:#2b2b2b"></div>
<div class="abs " style="left:22px;top:215px;width:1px;height:41px;background:rgba(255,255,255,.05)"></div>
<span class="t num" style="left:4px;top:223.3px;letter-spacing:-0.69px;">04</span>
<div class="abs " style="left:3px;top:241px;width:1.8px;height:1.8px;background:#1e1e1e;box-shadow:1px 1px 0 #747474"></div>
<div class="abs " style="left:7px;top:241px;width:1.8px;height:1.8px;background:#1e1e1e;box-shadow:1px 1px 0 #747474"></div>
<div class="abs " style="left:11px;top:241px;width:1.8px;height:1.8px;background:#1e1e1e;box-shadow:1px 1px 0 #747474"></div>
<div class="abs " style="left:15px;top:241px;width:1.8px;height:1.8px;background:#1e1e1e;box-shadow:1px 1px 0 #747474"></div>
<div class="abs " style="left:3px;top:245px;width:1.8px;height:1.8px;background:#1e1e1e;box-shadow:1px 1px 0 #747474"></div>
<div class="abs " style="left:7px;top:245px;width:1.8px;height:1.8px;background:#1e1e1e;box-shadow:1px 1px 0 #747474"></div>
<div class="abs " style="left:11px;top:245px;width:1.8px;height:1.8px;background:#1e1e1e;box-shadow:1px 1px 0 #747474"></div>
<div class="abs " style="left:15px;top:245px;width:1.8px;height:1.8px;background:#1e1e1e;box-shadow:1px 1px 0 #747474"></div>
<span class="t chn" style="left:28px;top:223.3px;letter-spacing:-0.51px;">Channel 4</span>
<div class="abs btn" style="left:132.1px;top:220.3px"></div>
<div class="abs btn" style="left:159.1px;top:220.3px"></div>
<svg class="abs" style="left:136.66px;top:222.61px" width="12.78" height="12.78" viewBox="-8 -8 16 16"><g fill="#d2d2d2"><rect x="-1.4" y="-7.7" width="2.8" height="3.4" rx=".3" transform="rotate(0)"/><rect x="-1.4" y="-7.7" width="2.8" height="3.4" rx=".3" transform="rotate(45)"/><rect x="-1.4" y="-7.7" width="2.8" height="3.4" rx=".3" transform="rotate(90)"/><rect x="-1.4" y="-7.7" width="2.8" height="3.4" rx=".3" transform="rotate(135)"/><rect x="-1.4" y="-7.7" width="2.8" height="3.4" rx=".3" transform="rotate(180)"/><rect x="-1.4" y="-7.7" width="2.8" height="3.4" rx=".3" transform="rotate(225)"/><rect x="-1.4" y="-7.7" width="2.8" height="3.4" rx=".3" transform="rotate(270)"/><rect x="-1.4" y="-7.7" width="2.8" height="3.4" rx=".3" transform="rotate(315)"/></g><circle r="4.55" fill="none" stroke="#d2d2d2" stroke-width="2.05"/></svg>
<svg class="abs" style="left:160px;top:220px" width="21" height="17" viewBox="163 6 21 17"><path d="M165.9 13.4h7.1M169.4 9.8v7.4" stroke="#d0d0d0" stroke-width="1.12" fill="none"/><path d="M173 20.5h3.8v-9.1h4.3" stroke="#d0d0d0" stroke-width="1.12" fill="none"/><path d="M173.8 17.4l3-3.5 3 3.5z" fill="#d0d0d0"/></svg>
<div class="abs " style="left:187.8px;top:215px;width:6.4px;height:41px;background:linear-gradient(90deg,rgba(0,0,0,0) 38%,rgba(0,0,0,.38) 46%,rgba(0,0,0,.38) 56%,rgba(0,0,0,.14) 64%),linear-gradient(#f8e83a,#f0ac10)"></div>
<div class="abs ann" style="top:215px"></div>
<div class="abs wav" style="top:227px"></div>
<div class="abs blk" style="left:195px;top:225.8px;width:736px;height:1.4px;"></div>
<div class="abs " style="left:195px;top:230px;width:25px;height:1.1px;background:#c49e10"></div>
<div class="abs " style="left:526px;top:230px;width:61px;height:1.1px;background:#a7820a;filter:brightness(1.07)"></div>
<div class="abs " style="left:893px;top:230px;width:38px;height:1.1px;background:#c49e10"></div>
<div class="abs " style="left:220px;top:230px;width:306px;height:23px;background:#a7820a"></div>
<div class="abs " style="left:587px;top:230px;width:306px;height:23px;background:#a7820a"></div>
<svg class="abs" style="left:195px;top:215px" width="736" height="12"><path d="M25.6 2v7M26 5.5H57M29.8 3.1L26.5 5.5l3.3 2.4" stroke="#e8e8e8" stroke-width="1.1" fill="none"/><path d="M329.6 2v7M329 5.5H297.5M325.2 3.1L328.5 5.5l-3.3 2.4" stroke="#e8e8e8" stroke-width="1.1" fill="none"/></svg>
<svg class="abs" style="left:255px;top:215.0px" width="22" height="10.9" viewBox="0 0 22 11" preserveAspectRatio="none"><path d="M0 0H19V3L21.4 5.5L19 8V11H0z" fill="#2f8fe2"/><path d="M5.8 1.4L2.8 5.6L5.8 9.8M14.3 1.4L17.3 5.6L14.3 9.8" stroke="#fff" stroke-width="1.15" fill="none"/><path d="M9.4 10.6V3.4q0-1.9 1.7-1.9h1M7.7 4.6h3.9" stroke="#fff" stroke-width="1.3" fill="none"/></svg>
<svg class="abs" style="left:338.8px;top:215.0px" width="36" height="10.9" viewBox="0 0 36 11" preserveAspectRatio="none"><path d="M0 0H33V3L35.4 5.5L33 8V11H0z" fill="#2f8fe2"/><path d="M5.9 1.4L2.9 5.6L5.9 9.8M28 1.4L31 5.6L28 9.8" stroke="#fff" stroke-width="1.15" fill="none"/><text x="8" y="8.5" font-family="Liberation Sans"  font-size="9.2" font-weight="bold" fill="#fff" stroke="#fff" stroke-width=".25" textLength="17.5" lengthAdjust="spacingAndGlyphs">duty</text></svg>
<svg class="abs" style="left:428.3px;top:215.0px" width="22" height="10.9" viewBox="0 0 22 11" preserveAspectRatio="none"><path d="M0 0H19V3L21.4 5.5L19 8V11H0z" fill="#2f8fe2"/><path d="M7.2 2.3H2.7L5.2 5.6L2.7 8.9H7.2" stroke="#fff" stroke-width="1.3" fill="none"/><path d="M9.3 2.3h2.3v6.6h3.9V2.3h2" stroke="#fff" stroke-width="1.3" fill="none"/></svg>
<span class="t at" style="left:282px;top:217.10000000000002px;letter-spacing:0.14px;transform:scaleX(1.16);transform-origin:0 0;">10.09 kHz</span>
<span class="t at" style="left:379.3px;top:217.10000000000002px;letter-spacing:0.4px;transform:scaleX(1.16);transform-origin:0 0;">49.87 %</span>
<span class="t at" style="left:456px;top:217.10000000000002px;letter-spacing:0.54px;transform:scaleX(1.16);transform-origin:0 0;">50000</span>
<div class="abs blk" style="left:0px;top:256px;width:186px;height:1px;"></div>
<div class="abs blk" style="left:186px;top:255.8px;width:745px;height:1.6px;"></div>
<div class="abs row" style="top:257px"></div>
<div class="abs " style="left:21px;top:257px;width:1px;height:41px;background:#2b2b2b"></div>
<div class="abs " style="left:22px;top:257px;width:1px;height:41px;background:rgba(255,255,255,.05)"></div>
<span class="t num" style="left:4px;top:265.3px;letter-spacing:-0.69px;">05</span>
<div class="abs " style="left:3px;top:283px;width:1.8px;height:1.8px;background:#1e1e1e;box-shadow:1px 1px 0 #747474"></div>
<div class="abs " style="left:7px;top:283px;width:1.8px;height:1.8px;background:#1e1e1e;box-shadow:1px 1px 0 #747474"></div>
<div class="abs " style="left:11px;top:283px;width:1.8px;height:1.8px;background:#1e1e1e;box-shadow:1px 1px 0 #747474"></div>
<div class="abs " style="left:15px;top:283px;width:1.8px;height:1.8px;background:#1e1e1e;box-shadow:1px 1px 0 #747474"></div>
<div class="abs " style="left:3px;top:287px;width:1.8px;height:1.8px;background:#1e1e1e;box-shadow:1px 1px 0 #747474"></div>
<div class="abs " style="left:7px;top:287px;width:1.8px;height:1.8px;background:#1e1e1e;box-shadow:1px 1px 0 #747474"></div>
<div class="abs " style="left:11px;top:287px;width:1.8px;height:1.8px;background:#1e1e1e;box-shadow:1px 1px 0 #747474"></div>
<div class="abs " style="left:15px;top:287px;width:1.8px;height:1.8px;background:#1e1e1e;box-shadow:1px 1px 0 #747474"></div>
<span class="t chn" style="left:28px;top:265.3px;letter-spacing:-0.51px;">Channel 5</span>
<div class="abs btn" style="left:132.1px;top:262.3px"></div>
<div class="abs btn" style="left:159.1px;top:262.3px"></div>
<svg class="abs" style="left:136.66px;top:264.61px" width="12.78" height="12.78" viewBox="-8 -8 16 16"><g fill="#d2d2d2"><rect x="-1.4" y="-7.7" width="2.8" height="3.4" rx=".3" transform="rotate(0)"/><rect x="-1.4" y="-7.7" width="2.8" height="3.4" rx=".3" transform="rotate(45)"/><rect x="-1.4" y="-7.7" width="2.8" height="3.4" rx=".3" transform="rotate(90)"/><rect x="-1.4" y="-7.7" width="2.8" height="3.4" rx=".3" transform="rotate(135)"/><rect x="-1.4" y="-7.7" width="2.8" height="3.4" rx=".3" transform="rotate(180)"/><rect x="-1.4" y="-7.7" width="2.8" height="3.4" rx=".3" transform="rotate(225)"/><rect x="-1.4" y="-7.7" width="2.8" height="3.4" rx=".3" transform="rotate(270)"/><rect x="-1.4" y="-7.7" width="2.8" height="3.4" rx=".3" transform="rotate(315)"/></g><circle r="4.55" fill="none" stroke="#d2d2d2" stroke-width="2.05"/></svg>
<svg class="abs" style="left:160px;top:262px" width="21" height="17" viewBox="163 6 21 17"><path d="M165.9 13.4h7.1M169.4 9.8v7.4" stroke="#d0d0d0" stroke-width="1.12" fill="none"/><path d="M173 20.5h3.8v-9.1h4.3" stroke="#d0d0d0" stroke-width="1.12" fill="none"/><path d="M173.8 17.4l3-3.5 3 3.5z" fill="#d0d0d0"/></svg>
<div class="abs " style="left:187.8px;top:257px;width:6.4px;height:41px;background:linear-gradient(90deg,rgba(0,0,0,0) 38%,rgba(0,0,0,.38) 46%,rgba(0,0,0,.38) 56%,rgba(0,0,0,.14) 64%),linear-gradient(#a0d850,#50a028)"></div>
<div class="abs ann" style="top:257px"></div>
<div class="abs wav" style="top:269px"></div>
<div class="abs blk" style="left:195px;top:267.8px;width:736px;height:1.4px;"></div>
<div class="abs " style="left:195px;top:272px;width:25px;height:1.1px;background:#5e9c10"></div>
<div class="abs " style="left:526px;top:272px;width:61px;height:1.1px;background:#487a08;filter:brightness(1.07)"></div>
<div class="abs " style="left:893px;top:272px;width:38px;height:1.1px;background:#5e9c10"></div>
<div class="abs " style="left:220px;top:272px;width:306px;height:23px;background:#487a08"></div>
<div class="abs " style="left:587px;top:272px;width:306px;height:23px;background:#487a08"></div>
<svg class="abs" style="left:195px;top:257px" width="736" height="12"><path d="M25.6 2v7M26 5.5H66M29.8 3.1L26.5 5.5l3.3 2.4" stroke="#e8e8e8" stroke-width="1.1" fill="none"/><path d="M329.6 2v7M329 5.5H289.5M325.2 3.1L328.5 5.5l-3.3 2.4" stroke="#e8e8e8" stroke-width="1.1" fill="none"/></svg>
<svg class="abs" style="left:264px;top:257.0px" width="22" height="10.9" viewBox="0 0 22 11" preserveAspectRatio="none"><path d="M0 0H19V3L21.4 5.5L19 8V11H0z" fill="#2f8fe2"/><path d="M5.8 1.4L2.8 5.6L5.8 9.8M14.3 1.4L17.3 5.6L14.3 9.8" stroke="#fff" stroke-width="1.15" fill="none"/><path d="M9.4 10.6V3.4q0-1.9 1.7-1.9h1M7.7 4.6h3.9" stroke="#fff" stroke-width="1.3" fill="none"/></svg>
<svg class="abs" style="left:348px;top:257.0px" width="36" height="10.9" viewBox="0 0 36 11" preserveAspectRatio="none"><path d="M0 0H33V3L35.4 5.5L33 8V11H0z" fill="#2f8fe2"/><path d="M5.9 1.4L2.9 5.6L5.9 9.8M28 1.4L31 5.6L28 9.8" stroke="#fff" stroke-width="1.15" fill="none"/><text x="8" y="8.5" font-family="Liberation Sans"  font-size="9.2" font-weight="bold" fill="#fff" stroke="#fff" stroke-width=".25" textLength="17.5" lengthAdjust="spacingAndGlyphs">duty</text></svg>
<svg class="abs" style="left:420.5px;top:257.0px" width="22" height="10.9" viewBox="0 0 22 11" preserveAspectRatio="none"><path d="M0 0H19V3L21.4 5.5L19 8V11H0z" fill="#2f8fe2"/><path d="M7.2 2.3H2.7L5.2 5.6L2.7 8.9H7.2" stroke="#fff" stroke-width="1.3" fill="none"/><path d="M9.3 2.3h2.3v6.6h3.9V2.3h2" stroke="#fff" stroke-width="1.3" fill="none"/></svg>
<span class="t at" style="left:290.5px;top:259.1px;letter-spacing:0.19px;transform:scaleX(1.16);transform-origin:0 0;">5.043 kHz</span>
<span class="t at" style="left:388px;top:259.1px;letter-spacing:0.35px;transform:scaleX(1.16);transform-origin:0 0;">50 %</span>
<span class="t at" style="left:448px;top:259.1px;letter-spacing:0.54px;transform:scaleX(1.16);transform-origin:0 0;">25000</span>
<div class="abs blk" style="left:0px;top:298px;width:186px;height:1px;"></div>
<div class="abs blk" style="left:186px;top:297.8px;width:745px;height:1.6px;"></div>
<div class="abs row" style="top:299px"></div>
<div class="abs " style="left:21px;top:299px;width:1px;height:41px;background:#2b2b2b"></div>
<div class="abs " style="left:22px;top:299px;width:1px;height:41px;background:rgba(255,255,255,.05)"></div>
<span class="t num" style="left:4px;top:307.3px;letter-spacing:-0.69px;">06</span>
<div class="abs " style="left:3px;top:325px;width:1.8px;height:1.8px;background:#1e1e1e;box-shadow:1px 1px 0 #747474"></div>
<div class="abs " style="left:7px;top:325px;width:1.8px;height:1.8px;background:#1e1e1e;box-shadow:1px 1px 0 #747474"></div>
<div class="abs " style="left:11px;top:325px;width:1.8px;height:1.8px;background:#1e1e1e;box-shadow:1px 1px 0 #747474"></div>
<div class="abs " style="left:15px;top:325px;width:1.8px;height:1.8px;background:#1e1e1e;box-shadow:1px 1px 0 #747474"></div>
<div class="abs " style="left:3px;top:329px;width:1.8px;height:1.8px;background:#1e1e1e;box-shadow:1px 1px 0 #747474"></div>
<div class="abs " style="left:7px;top:329px;width:1.8px;height:1.8px;background:#1e1e1e;box-shadow:1px 1px 0 #747474"></div>
<div class="abs " style="left:11px;top:329px;width:1.8px;height:1.8px;background:#1e1e1e;box-shadow:1px 1px 0 #747474"></div>
<div class="abs " style="left:15px;top:329px;width:1.8px;height:1.8px;background:#1e1e1e;box-shadow:1px 1px 0 #747474"></div>
<span class="t chn" style="left:28px;top:307.3px;letter-spacing:-0.51px;">Channel 6</span>
<div class="abs btn" style="left:132.1px;top:304.3px"></div>
<div class="abs btn" style="left:159.1px;top:304.3px"></div>
<svg class="abs" style="left:136.66px;top:306.61px" width="12.78" height="12.78" viewBox="-8 -8 16 16"><g fill="#d2d2d2"><rect x="-1.4" y="-7.7" width="2.8" height="3.4" rx=".3" transform="rotate(0)"/><rect x="-1.4" y="-7.7" width="2.8" height="3.4" rx=".3" transform="rotate(45)"/><rect x="-1.4" y="-7.7" width="2.8" height="3.4" rx=".3" transform="rotate(90)"/><rect x="-1.4" y="-7.7" width="2.8" height="3.4" rx=".3" transform="rotate(135)"/><rect x="-1.4" y="-7.7" width="2.8" height="3.4" rx=".3" transform="rotate(180)"/><rect x="-1.4" y="-7.7" width="2.8" height="3.4" rx=".3" transform="rotate(225)"/><rect x="-1.4" y="-7.7" width="2.8" height="3.4" rx=".3" transform="rotate(270)"/><rect x="-1.4" y="-7.7" width="2.8" height="3.4" rx=".3" transform="rotate(315)"/></g><circle r="4.55" fill="none" stroke="#d2d2d2" stroke-width="2.05"/></svg>
<svg class="abs" style="left:160px;top:304px" width="21" height="17" viewBox="163 6 21 17"><path d="M165.9 13.4h7.1M169.4 9.8v7.4" stroke="#d0d0d0" stroke-width="1.12" fill="none"/><path d="M173 20.5h3.8v-9.1h4.3" stroke="#d0d0d0" stroke-width="1.12" fill="none"/><path d="M173.8 17.4l3-3.5 3 3.5z" fill="#d0d0d0"/></svg>
<div class="abs " style="left:187.8px;top:299px;width:6.4px;height:41px;background:linear-gradient(90deg,rgba(0,0,0,0) 38%,rgba(0,0,0,.38) 46%,rgba(0,0,0,.38) 56%,rgba(0,0,0,.14) 64%),linear-gradient(#3a7ad8,#4836b0)"></div>
<div class="abs ann" style="top:299px"></div>
<div class="abs wav" style="top:311px"></div>
<div class="abs blk" style="left:195px;top:309.8px;width:736px;height:1.4px;"></div>
<div class="abs " style="left:195px;top:314px;width:25px;height:1.1px;background:#447cd4"></div>
<div class="abs " style="left:526px;top:314px;width:61px;height:1.1px;background:#3a68bb;filter:brightness(1.07)"></div>
<div class="abs " style="left:893px;top:314px;width:38px;height:1.1px;background:#447cd4"></div>
<div class="abs " style="left:220px;top:314px;width:306px;height:23px;background:#3a68bb"></div>
<div class="abs " style="left:587px;top:314px;width:306px;height:23px;background:#3a68bb"></div>
<svg class="abs" style="left:195px;top:299px" width="736" height="12"><path d="M25.6 2v7M26 5.5H66M29.8 3.1L26.5 5.5l3.3 2.4" stroke="#e8e8e8" stroke-width="1.1" fill="none"/><path d="M329.6 2v7M329 5.5H289.5M325.2 3.1L328.5 5.5l-3.3 2.4" stroke="#e8e8e8" stroke-width="1.1" fill="none"/></svg>
<svg class="abs" style="left:264px;top:299.0px" width="22" height="10.9" viewBox="0 0 22 11" preserveAspectRatio="none"><path d="M0 0H19V3L21.4 5.5L19 8V11H0z" fill="#2f8fe2"/><path d="M5.8 1.4L2.8 5.6L5.8 9.8M14.3 1.4L17.3 5.6L14.3 9.8" stroke="#fff" stroke-width="1.15" fill="none"/><path d="M9.4 10.6V3.4q0-1.9 1.7-1.9h1M7.7 4.6h3.9" stroke="#fff" stroke-width="1.3" fill="none"/></svg>
<svg class="abs" style="left:348px;top:299.0px" width="36" height="10.9" viewBox="0 0 36 11" preserveAspectRatio="none"><path d="M0 0H33V3L35.4 5.5L33 8V11H0z" fill="#2f8fe2"/><path d="M5.9 1.4L2.9 5.6L5.9 9.8M28 1.4L31 5.6L28 9.8" stroke="#fff" stroke-width="1.15" fill="none"/><text x="8" y="8.5" font-family="Liberation Sans"  font-size="9.2" font-weight="bold" fill="#fff" stroke="#fff" stroke-width=".25" textLength="17.5" lengthAdjust="spacingAndGlyphs">duty</text></svg>
<svg class="abs" style="left:420.5px;top:299.0px" width="22" height="10.9" viewBox="0 0 22 11" preserveAspectRatio="none"><path d="M0 0H19V3L21.4 5.5L19 8V11H0z" fill="#2f8fe2"/><path d="M7.2 2.3H2.7L5.2 5.6L2.7 8.9H7.2" stroke="#fff" stroke-width="1.3" fill="none"/><path d="M9.3 2.3h2.3v6.6h3.9V2.3h2" stroke="#fff" stroke-width="1.3" fill="none"/></svg>
<span class="t at" style="left:290.5px;top:301.1px;letter-spacing:0.19px;transform:scaleX(1.16);transform-origin:0 0;">2.017 kHz</span>
<span class="t at" style="left:388px;top:301.1px;letter-spacing:0.35px;transform:scaleX(1.16);transform-origin:0 0;">50 %</span>
<span class="t at" style="left:448px;top:301.1px;letter-spacing:0.54px;transform:scaleX(1.16);transform-origin:0 0;">10000</span>
<div class="abs blk" style="left:0px;top:340px;width:186px;height:1px;"></div>
<div class="abs blk" style="left:186px;top:339.8px;width:745px;height:1.6px;"></div>
<div class="abs row" style="top:341px"></div>
<div class="abs " style="left:21px;top:341px;width:1px;height:41px;background:#2b2b2b"></div>
<div class="abs " style="left:22px;top:341px;width:1px;height:41px;background:rgba(255,255,255,.05)"></div>
<span class="t num" style="left:4px;top:349.3px;letter-spacing:-0.69px;">07</span>
<div class="abs " style="left:3px;top:367px;width:1.8px;height:1.8px;background:#1e1e1e;box-shadow:1px 1px 0 #747474"></div>
<div class="abs " style="left:7px;top:367px;width:1.8px;height:1.8px;background:#1e1e1e;box-shadow:1px 1px 0 #747474"></div>
<div class="abs " style="left:11px;top:367px;width:1.8px;height:1.8px;background:#1e1e1e;box-shadow:1px 1px 0 #747474"></div>
<div class="abs " style="left:15px;top:367px;width:1.8px;height:1.8px;background:#1e1e1e;box-shadow:1px 1px 0 #747474"></div>
<div class="abs " style="left:3px;top:371px;width:1.8px;height:1.8px;background:#1e1e1e;box-shadow:1px 1px 0 #747474"></div>
<div class="abs " style="left:7px;top:371px;width:1.8px;height:1.8px;background:#1e1e1e;box-shadow:1px 1px 0 #747474"></div>
<div class="abs " style="left:11px;top:371px;width:1.8px;height:1.8px;background:#1e1e1e;box-shadow:1px 1px 0 #747474"></div>
<div class="abs " style="left:15px;top:371px;width:1.8px;height:1.8px;background:#1e1e1e;box-shadow:1px 1px 0 #747474"></div>
<span class="t chn" style="left:28px;top:349.3px;letter-spacing:-0.51px;">Channel 7</span>
<div class="abs btn" style="left:132.1px;top:346.3px"></div>
<div class="abs btn" style="left:159.1px;top:346.3px"></div>
<svg class="abs" style="left:136.66px;top:348.61px" width="12.78" height="12.78" viewBox="-8 -8 16 16"><g fill="#d2d2d2"><rect x="-1.4" y="-7.7" width="2.8" height="3.4" rx=".3" transform="rotate(0)"/><rect x="-1.4" y="-7.7" width="2.8" height="3.4" rx=".3" transform="rotate(45)"/><rect x="-1.4" y="-7.7" width="2.8" height="3.4" rx=".3" transform="rotate(90)"/><rect x="-1.4" y="-7.7" width="2.8" height="3.4" rx=".3" transform="rotate(135)"/><rect x="-1.4" y="-7.7" width="2.8" height="3.4" rx=".3" transform="rotate(180)"/><rect x="-1.4" y="-7.7" width="2.8" height="3.4" rx=".3" transform="rotate(225)"/><rect x="-1.4" y="-7.7" width="2.8" height="3.4" rx=".3" transform="rotate(270)"/><rect x="-1.4" y="-7.7" width="2.8" height="3.4" rx=".3" transform="rotate(315)"/></g><circle r="4.55" fill="none" stroke="#d2d2d2" stroke-width="2.05"/></svg>
<svg class="abs" style="left:160px;top:346px" width="21" height="17" viewBox="163 6 21 17"><path d="M165.9 13.4h7.1M169.4 9.8v7.4" stroke="#d0d0d0" stroke-width="1.12" fill="none"/><path d="M173 20.5h3.8v-9.1h4.3" stroke="#d0d0d0" stroke-width="1.12" fill="none"/><path d="M173.8 17.4l3-3.5 3 3.5z" fill="#d0d0d0"/></svg>
<div class="abs " style="left:187.8px;top:341px;width:6.4px;height:41px;background:linear-gradient(90deg,rgba(0,0,0,0) 38%,rgba(0,0,0,.38) 46%,rgba(0,0,0,.38) 56%,rgba(0,0,0,.14) 64%),linear-gradient(#c858da,#8636c8)"></div>
<div class="abs ann" style="top:341px"></div>
<div class="abs wav" style="top:353px"></div>
<div class="abs blk" style="left:195px;top:351.8px;width:736px;height:1.4px;"></div>
<div class="abs " style="left:195px;top:356px;width:25px;height:1.1px;background:#9a3cdc"></div>
<div class="abs " style="left:526px;top:356px;width:61px;height:1.1px;background:#8130c0;filter:brightness(1.07)"></div>
<div class="abs " style="left:893px;top:356px;width:38px;height:1.1px;background:#9a3cdc"></div>
<div class="abs " style="left:220px;top:356px;width:306px;height:23px;background:#8130c0"></div>
<div class="abs " style="left:587px;top:356px;width:306px;height:23px;background:#8130c0"></div>
<svg class="abs" style="left:195px;top:341px" width="736" height="12"><path d="M25.6 2v7M26 5.5H68.80000000000001M29.8 3.1L26.5 5.5l3.3 2.4" stroke="#e8e8e8" stroke-width="1.1" fill="none"/><path d="M329.6 2v7M329 5.5H286.0M325.2 3.1L328.5 5.5l-3.3 2.4" stroke="#e8e8e8" stroke-width="1.1" fill="none"/></svg>
<svg class="abs" style="left:266.8px;top:341.0px" width="22" height="10.9" viewBox="0 0 22 11" preserveAspectRatio="none"><path d="M0 0H19V3L21.4 5.5L19 8V11H0z" fill="#2f8fe2"/><path d="M5.8 1.4L2.8 5.6L5.8 9.8M14.3 1.4L17.3 5.6L14.3 9.8" stroke="#fff" stroke-width="1.15" fill="none"/><path d="M9.4 10.6V3.4q0-1.9 1.7-1.9h1M7.7 4.6h3.9" stroke="#fff" stroke-width="1.3" fill="none"/></svg>
<svg class="abs" style="left:351px;top:341.0px" width="36" height="10.9" viewBox="0 0 36 11" preserveAspectRatio="none"><path d="M0 0H33V3L35.4 5.5L33 8V11H0z" fill="#2f8fe2"/><path d="M5.9 1.4L2.9 5.6L5.9 9.8M28 1.4L31 5.6L28 9.8" stroke="#fff" stroke-width="1.15" fill="none"/><text x="8" y="8.5" font-family="Liberation Sans"  font-size="9.2" font-weight="bold" fill="#fff" stroke="#fff" stroke-width=".25" textLength="17.5" lengthAdjust="spacingAndGlyphs">duty</text></svg>
<svg class="abs" style="left:424.0px;top:341.0px" width="22" height="10.9" viewBox="0 0 22 11" preserveAspectRatio="none"><path d="M0 0H19V3L21.4 5.5L19 8V11H0z" fill="#2f8fe2"/><path d="M7.2 2.3H2.7L5.2 5.6L2.7 8.9H7.2" stroke="#fff" stroke-width="1.3" fill="none"/><path d="M9.3 2.3h2.3v6.6h3.9V2.3h2" stroke="#fff" stroke-width="1.3" fill="none"/></svg>
<span class="t at" style="left:294px;top:343.1px;letter-spacing:0.14px;transform:scaleX(1.16);transform-origin:0 0;">1.009 kHz</span>
<span class="t at" style="left:391.5px;top:343.1px;letter-spacing:0.35px;transform:scaleX(1.16);transform-origin:0 0;">50 %</span>
<span class="t at" style="left:451.5px;top:343.1px;letter-spacing:0.5px;transform:scaleX(1.16);transform-origin:0 0;">5000</span>
<div class="abs blk" style="left:0px;top:382px;width:931px;height:1px;"></div>
<div class="abs " style="left:0px;top:642px;width:940px;height:1px;background:#0a0a0a"></div>
<div class="abs " style="left:0px;top:643px;width:186px;height:15px;background:linear-gradient(#424242,#3c3c3c)"></div>
<div class="abs " style="left:186px;top:643px;width:1px;height:15px;background:#262626"></div>
<div class="abs " style="left:187px;top:643px;width:17px;height:15px;background:linear-gradient(#4a4a4a,#424242)"></div>
<div class="abs " style="left:204px;top:643px;width:717px;height:15px;background:#0c0c0c"></div>
<div class="abs " style="left:205px;top:644px;width:715px;height:13px;background:linear-gradient(#6a6a6a,#4c4c4c 45%,#3c3c3c);border-radius:7px;box-shadow:inset 0 1px 0 rgba(255,255,255,.12)"></div>
<div class="abs " style="left:922px;top:643px;width:18px;height:15px;background:linear-gradient(#4a4a4a,#424242)"></div>
<svg class="abs" style="left:192px;top:646px" width="6" height="10"><path d="M5.5 0.5v9L0.5 5z" fill="#999"/></svg>
<svg class="abs" style="left:929px;top:646px" width="6" height="10"><path d="M0.5 0.5v9L5.5 5z" fill="#999"/></svg>
<div class="abs " style="left:0px;top:658px;width:940px;height:1px;background:#333"></div>
<div class="abs " style="left:0px;top:659px;width:940px;height:9px;background:linear-gradient(#494949,#434343)"></div>
<svg class="abs" style="left:0;top:668px" width="940" height="28" viewBox="3 708 940 28"><rect x="3" y="708" width="940" height="28" fill="#232323"/><path d="M3 708.5H943" stroke="#0c0c0c" stroke-width="1"/><path d="M337 709.5L348.5 726Q350.2 728.5 353.5 728.5H513Q516.5 728.5 518.2 726L530.2 709.5z" fill="#363636" stroke="#0e0e0e" stroke-width="1"/><path d="M150 709.5L161.5 726Q163.2 728.5 166.5 728.5H326Q329.5 728.5 331.2 726L343.2 709.5z" fill="#363636" stroke="#0e0e0e" stroke-width="1"/><path d="M134 709.5H157.5L146 727C145 728.5 143.5 729.5 141 729.5H116z" fill="#353535" stroke="#141414" stroke-width="1"/><path d="M3 707.5H136.5C131 710 124 729.5 116 730.5H27C16 730.5 12 709 3 708z" fill="#434343"/><path d="M3 708.5C12 709 16 730.5 27 730.5H116" stroke="#2a2a2a" stroke-width="1" fill="none"/><path d="M116 730.5C123 729.5 130 712 135.5 709" stroke="#222" stroke-width="1" fill="none"/><path d="M172.5 712v15M359.5 712v15" stroke="#161616" stroke-width="1.4" stroke-dasharray="1.5 1.5"/><path d="M133.6 715.3l3.9 3.9-3.9 3.9M138.8 715.3l3.9 3.9-3.9 3.9" stroke="#c4c4c4" stroke-width="2.1" fill="none"/><circle cx="36.6" cy="717.3" r="4.6" fill="none" stroke="#a2a2a2" stroke-width="1.7"/><path d="M39.8 721l3.8 4.2" stroke="#a2a2a2" stroke-width="2.1"/><path d="M43.5 715.5h3.5M43.5 717.5h3.5M43.5 719.5h3.5" stroke="#bdbdbd" stroke-width="0.9"/></svg>
<span class="t capt" style="left:50.7px;top:670.6px;letter-spacing:-0.15px;">Capture</span>
<span class="t tabt" style="left:181.5px;top:672.8px;letter-spacing:0.3px;">24 MHz, 720 ...</span>
<span class="t tabt" style="left:368.5px;top:672.8px;letter-spacing:0.3px;">24 MHz, 720 ...</span>
<svg class="abs" style="left:303.62px;top:671.92px" width="14.75" height="14.75" viewBox="-8 -8 16 16"><g fill="#b6b6b6"><rect x="-1.4" y="-7.7" width="2.8" height="3.4" rx=".3" transform="rotate(0)"/><rect x="-1.4" y="-7.7" width="2.8" height="3.4" rx=".3" transform="rotate(45)"/><rect x="-1.4" y="-7.7" width="2.8" height="3.4" rx=".3" transform="rotate(90)"/><rect x="-1.4" y="-7.7" width="2.8" height="3.4" rx=".3" transform="rotate(135)"/><rect x="-1.4" y="-7.7" width="2.8" height="3.4" rx=".3" transform="rotate(180)"/><rect x="-1.4" y="-7.7" width="2.8" height="3.4" rx=".3" transform="rotate(225)"/><rect x="-1.4" y="-7.7" width="2.8" height="3.4" rx=".3" transform="rotate(270)"/><rect x="-1.4" y="-7.7" width="2.8" height="3.4" rx=".3" transform="rotate(315)"/></g><circle r="4.55" fill="none" stroke="#b6b6b6" stroke-width="2.05"/></svg>
<svg class="abs" style="left:490.62px;top:671.92px" width="14.75" height="14.75" viewBox="-8 -8 16 16"><g fill="#b6b6b6"><rect x="-1.4" y="-7.7" width="2.8" height="3.4" rx=".3" transform="rotate(0)"/><rect x="-1.4" y="-7.7" width="2.8" height="3.4" rx=".3" transform="rotate(45)"/><rect x="-1.4" y="-7.7" width="2.8" height="3.4" rx=".3" transform="rotate(90)"/><rect x="-1.4" y="-7.7" width="2.8" height="3.4" rx=".3" transform="rotate(135)"/><rect x="-1.4" y="-7.7" width="2.8" height="3.4" rx=".3" transform="rotate(180)"/><rect x="-1.4" y="-7.7" width="2.8" height="3.4" rx=".3" transform="rotate(225)"/><rect x="-1.4" y="-7.7" width="2.8" height="3.4" rx=".3" transform="rotate(270)"/><rect x="-1.4" y="-7.7" width="2.8" height="3.4" rx=".3" transform="rotate(315)"/></g><circle r="4.55" fill="none" stroke="#b6b6b6" stroke-width="2.05"/></svg>
</div>
<div class="abs" id="side">
<div class="abs shdr" style="left:0px;top:0px;width:238px;height:28px;"></div>
<div class="abs " style="left:0px;top:28px;width:238px;height:1px;background:#0a0a0a"></div>
<svg class="abs" style="left:9px;top:9px" width="12" height="9"><path d="M0 0h12l-6 9z" fill="#dcdcdc"/></svg>
<span class="t sh" style="left:26.299999999999955px;top:8.899999999999999px;letter-spacing:0.06px;">Annotations</span>
<div class="abs" id="plus"></div>
<svg class="abs" style="left:213px;top:8px" width="11" height="11"><path d="M0 5.4h11M5.5 0v10.8" stroke="#ebebeb" stroke-width="3.3"/></svg>
<div class="abs crow" style="top:29px"></div>
<svg class="abs" style="left:24px;top:29px" width="8" height="29"><path d="M6.5 0V9.5L2.5 13.5L6.5 17.5V29" stroke="#2a2a2a" stroke-width="1" fill="none"/><path d="M7.5 0V9.2L3.6 13.5L7.5 17.8V29" stroke="rgba(255,255,255,.06)" stroke-width="1" fill="none"/></svg>
<svg class="abs" style="left:7px;top:39px" width="12" height="7"><path d="M2 3.5h8" stroke="#a0a0a0" stroke-width="1"/><path d="M3.4 1.1L0.3 3.5l3.1 2.4zM8.6 1.1l3.1 2.4-3.1 2.4z" fill="#a0a0a0"/></svg>
<span class="t cn" style="left:40.5px;top:37.5px;letter-spacing:-0.36px;">Channel 0</span>
<svg class="abs" style="left:188.5px;top:37.8px" width="11" height="8"><path d="M0.3 0h10.2l-5.1 7.5z" fill="#999"/></svg>
<svg class="abs" style="left:211.54999999999995px;top:36.5px" width="13" height="13" viewBox="-6.5 -6.5 13 13"><g fill="#a0a0a0"><rect x="-1.2" y="-6.15" width="2.4" height="3.6" transform="rotate(0)"/><rect x="-1.2" y="-6.15" width="2.4" height="3.6" transform="rotate(45)"/><rect x="-1.2" y="-6.15" width="2.4" height="3.6" transform="rotate(90)"/><rect x="-1.2" y="-6.15" width="2.4" height="3.6" transform="rotate(135)"/><rect x="-1.2" y="-6.15" width="2.4" height="3.6" transform="rotate(180)"/><rect x="-1.2" y="-6.15" width="2.4" height="3.6" transform="rotate(225)"/><rect x="-1.2" y="-6.15" width="2.4" height="3.6" transform="rotate(270)"/><rect x="-1.2" y="-6.15" width="2.4" height="3.6" transform="rotate(315)"/></g><circle r="3.15" fill="none" stroke="#a0a0a0" stroke-width="2.1"/></svg>
<div class="abs cbody" style="left:0px;top:59px;width:238px;height:96px;"></div>
<svg class="abs" style="left:0;top:53px" width="238" height="7"><path d="M0 5.5H187L194 1.2L201 5.5H238V7H0z" fill="#2f2f2f"/><path d="M0 5.5H187L194 1.2L201 5.5H238" stroke="#1f1f1f" stroke-width="1.2" fill="none"/></svg>
<span class="t ct" style="left:9px;top:74.2px;letter-spacing:-0.08px;">Average Frequency: 201.7 kHz</span>
<span class="t ct" style="left:9px;top:101.19999999999999px;letter-spacing:-0.17px;">Average Duty Cycle: 39.57 %</span>
<span class="t ct" style="left:9px;top:128.2px;letter-spacing:0.06px;">Negative Pulses: 1000000</span>
<div class="abs " style="left:0px;top:154px;width:238px;height:1px;background:#1a1a1a"></div>
<div class="abs crow" style="top:155px"></div>
<svg class="abs" style="left:24px;top:155px" width="8" height="29"><path d="M6.5 0V9.5L2.5 13.5L6.5 17.5V29" stroke="#2a2a2a" stroke-width="1" fill="none"/><path d="M7.5 0V9.2L3.6 13.5L7.5 17.8V29" stroke="rgba(255,255,255,.06)" stroke-width="1" fill="none"/></svg>
<svg class="abs" style="left:7px;top:165px" width="12" height="7"><path d="M2 3.5h8" stroke="#a0a0a0" stroke-width="1"/><path d="M3.4 1.1L0.3 3.5l3.1 2.4zM8.6 1.1l3.1 2.4-3.1 2.4z" fill="#a0a0a0"/></svg>
<span class="t cn" style="left:40.5px;top:163.5px;letter-spacing:-0.36px;">Channel 1</span>
<svg class="abs" style="left:188.5px;top:163.8px" width="11" height="8"><path d="M0.3 0h10.2l-5.1 7.5z" fill="#999"/></svg>
<svg class="abs" style="left:211.54999999999995px;top:162.5px" width="13" height="13" viewBox="-6.5 -6.5 13 13"><g fill="#a0a0a0"><rect x="-1.2" y="-6.15" width="2.4" height="3.6" transform="rotate(0)"/><rect x="-1.2" y="-6.15" width="2.4" height="3.6" transform="rotate(45)"/><rect x="-1.2" y="-6.15" width="2.4" height="3.6" transform="rotate(90)"/><rect x="-1.2" y="-6.15" width="2.4" height="3.6" transform="rotate(135)"/><rect x="-1.2" y="-6.15" width="2.4" height="3.6" transform="rotate(180)"/><rect x="-1.2" y="-6.15" width="2.4" height="3.6" transform="rotate(225)"/><rect x="-1.2" y="-6.15" width="2.4" height="3.6" transform="rotate(270)"/><rect x="-1.2" y="-6.15" width="2.4" height="3.6" transform="rotate(315)"/></g><circle r="3.15" fill="none" stroke="#a0a0a0" stroke-width="2.1"/></svg>
<div class="abs cbody" style="left:0px;top:185px;width:238px;height:96px;"></div>
<svg class="abs" style="left:0;top:179px" width="238" height="7"><path d="M0 5.5H187L194 1.2L201 5.5H238V7H0z" fill="#2f2f2f"/><path d="M0 5.5H187L194 1.2L201 5.5H238" stroke="#1f1f1f" stroke-width="1.2" fill="none"/></svg>
<span class="t ct" style="left:9px;top:200.2px;letter-spacing:-0.08px;">Average Frequency: 100.9 kHz</span>
<span class="t ct" style="left:9px;top:227.2px;letter-spacing:-0.17px;">Average Duty Cycle: 46.44 %</span>
<span class="t ct" style="left:9px;top:254.2px;letter-spacing:0.06px;">Negative Pulses: 500000</span>
<div class="abs " style="left:0px;top:280px;width:238px;height:1px;background:#1a1a1a"></div>
<div class="abs crow" style="top:281px"></div>
<svg class="abs" style="left:24px;top:281px" width="8" height="29"><path d="M6.5 0V9.5L2.5 13.5L6.5 17.5V29" stroke="#2a2a2a" stroke-width="1" fill="none"/><path d="M7.5 0V9.2L3.6 13.5L7.5 17.8V29" stroke="rgba(255,255,255,.06)" stroke-width="1" fill="none"/></svg>
<svg class="abs" style="left:7px;top:291px" width="12" height="7"><path d="M2 3.5h8" stroke="#a0a0a0" stroke-width="1"/><path d="M3.4 1.1L0.3 3.5l3.1 2.4zM8.6 1.1l3.1 2.4-3.1 2.4z" fill="#a0a0a0"/></svg>
<span class="t cn" style="left:40.5px;top:289.5px;letter-spacing:-0.36px;">Channel 2</span>
<svg class="abs" style="left:188.5px;top:289.8px" width="11" height="8"><path d="M0.3 0h10.2l-5.1 7.5z" fill="#999"/></svg>
<svg class="abs" style="left:211.54999999999995px;top:288.5px" width="13" height="13" viewBox="-6.5 -6.5 13 13"><g fill="#a0a0a0"><rect x="-1.2" y="-6.15" width="2.4" height="3.6" transform="rotate(0)"/><rect x="-1.2" y="-6.15" width="2.4" height="3.6" transform="rotate(45)"/><rect x="-1.2" y="-6.15" width="2.4" height="3.6" transform="rotate(90)"/><rect x="-1.2" y="-6.15" width="2.4" height="3.6" transform="rotate(135)"/><rect x="-1.2" y="-6.15" width="2.4" height="3.6" transform="rotate(180)"/><rect x="-1.2" y="-6.15" width="2.4" height="3.6" transform="rotate(225)"/><rect x="-1.2" y="-6.15" width="2.4" height="3.6" transform="rotate(270)"/><rect x="-1.2" y="-6.15" width="2.4" height="3.6" transform="rotate(315)"/></g><circle r="3.15" fill="none" stroke="#a0a0a0" stroke-width="2.1"/></svg>
<div class="abs cbody" style="left:0px;top:311px;width:238px;height:96px;"></div>
<svg class="abs" style="left:0;top:305px" width="238" height="7"><path d="M0 5.5H187L194 1.2L201 5.5H238V7H0z" fill="#2f2f2f"/><path d="M0 5.5H187L194 1.2L201 5.5H238" stroke="#1f1f1f" stroke-width="1.2" fill="none"/></svg>
<span class="t ct" style="left:9px;top:326.2px;letter-spacing:-0.08px;">Average Frequency: 50.43 kHz</span>
<span class="t ct" style="left:9px;top:353.2px;letter-spacing:-0.17px;">Average Duty Cycle: 49.86 %</span>
<span class="t ct" style="left:9px;top:380.2px;letter-spacing:0.06px;">Negative Pulses: 250000</span>
<div class="abs " style="left:0px;top:406px;width:238px;height:1px;background:#1a1a1a"></div>
<div class="abs crow2" style="top:407px"></div>
<svg class="abs" style="left:24px;top:407px" width="8" height="29"><path d="M6.5 0V9.5L2.5 13.5L6.5 17.5V29" stroke="#2a2a2a" stroke-width="1" fill="none"/><path d="M7.5 0V9.2L3.6 13.5L7.5 17.8V29" stroke="rgba(255,255,255,.06)" stroke-width="1" fill="none"/></svg>
<svg class="abs" style="left:7px;top:417px" width="12" height="7"><path d="M2 3.5h8" stroke="#a0a0a0" stroke-width="1"/><path d="M3.4 1.1L0.3 3.5l3.1 2.4zM8.6 1.1l3.1 2.4-3.1 2.4z" fill="#a0a0a0"/></svg>
<span class="t cn" style="left:40.5px;top:415.5px;letter-spacing:-0.36px;">Channel 3</span>
<svg class="abs" style="left:189.5px;top:416px" width="9" height="11"><path d="M0 0v10.4l8.6-5.2z" fill="#a8a8a8"/></svg>
<svg class="abs" style="left:211.54999999999995px;top:414.5px" width="13" height="13" viewBox="-6.5 -6.5 13 13"><g fill="#b0b0b0"><rect x="-1.2" y="-6.15" width="2.4" height="3.6" transform="rotate(0)"/><rect x="-1.2" y="-6.15" width="2.4" height="3.6" transform="rotate(45)"/><rect x="-1.2" y="-6.15" width="2.4" height="3.6" transform="rotate(90)"/><rect x="-1.2" y="-6.15" width="2.4" height="3.6" transform="rotate(135)"/><rect x="-1.2" y="-6.15" width="2.4" height="3.6" transform="rotate(180)"/><rect x="-1.2" y="-6.15" width="2.4" height="3.6" transform="rotate(225)"/><rect x="-1.2" y="-6.15" width="2.4" height="3.6" transform="rotate(270)"/><rect x="-1.2" y="-6.15" width="2.4" height="3.6" transform="rotate(315)"/></g><circle r="3.15" fill="none" stroke="#b0b0b0" stroke-width="2.1"/></svg>
<div class="abs " style="left:0px;top:436px;width:238px;height:1px;background:#1c1c1c"></div>
<div class="abs crow2" style="top:437px"></div>
<svg class="abs" style="left:24px;top:437px" width="8" height="29"><path d="M6.5 0V9.5L2.5 13.5L6.5 17.5V29" stroke="#2a2a2a" stroke-width="1" fill="none"/><path d="M7.5 0V9.2L3.6 13.5L7.5 17.8V29" stroke="rgba(255,255,255,.06)" stroke-width="1" fill="none"/></svg>
<svg class="abs" style="left:7px;top:447px" width="12" height="7"><path d="M2 3.5h8" stroke="#a0a0a0" stroke-width="1"/><path d="M3.4 1.1L0.3 3.5l3.1 2.4zM8.6 1.1l3.1 2.4-3.1 2.4z" fill="#a0a0a0"/></svg>
<span class="t cn" style="left:40.5px;top:445.5px;letter-spacing:-0.36px;">Channel 4</span>
<svg class="abs" style="left:189.5px;top:446px" width="9" height="11"><path d="M0 0v10.4l8.6-5.2z" fill="#a8a8a8"/></svg>
<svg class="abs" style="left:211.54999999999995px;top:444.5px" width="13" height="13" viewBox="-6.5 -6.5 13 13"><g fill="#b0b0b0"><rect x="-1.2" y="-6.15" width="2.4" height="3.6" transform="rotate(0)"/><rect x="-1.2" y="-6.15" width="2.4" height="3.6" transform="rotate(45)"/><rect x="-1.2" y="-6.15" width="2.4" height="3.6" transform="rotate(90)"/><rect x="-1.2" y="-6.15" width="2.4" height="3.6" transform="rotate(135)"/><rect x="-1.2" y="-6.15" width="2.4" height="3.6" transform="rotate(180)"/><rect x="-1.2" y="-6.15" width="2.4" height="3.6" transform="rotate(225)"/><rect x="-1.2" y="-6.15" width="2.4" height="3.6" transform="rotate(270)"/><rect x="-1.2" y="-6.15" width="2.4" height="3.6" transform="rotate(315)"/></g><circle r="3.15" fill="none" stroke="#b0b0b0" stroke-width="2.1"/></svg>
<div class="abs " style="left:0px;top:466px;width:238px;height:1px;background:#1c1c1c"></div>
<div class="abs crow2" style="top:467px"></div>
<svg class="abs" style="left:24px;top:467px" width="8" height="29"><path d="M6.5 0V9.5L2.5 13.5L6.5 17.5V29" stroke="#2a2a2a" stroke-width="1" fill="none"/><path d="M7.5 0V9.2L3.6 13.5L7.5 17.8V29" stroke="rgba(255,255,255,.06)" stroke-width="1" fill="none"/></svg>
<svg class="abs" style="left:7px;top:477px" width="12" height="7"><path d="M2 3.5h8" stroke="#a0a0a0" stroke-width="1"/><path d="M3.4 1.1L0.3 3.5l3.1 2.4zM8.6 1.1l3.1 2.4-3.1 2.4z" fill="#a0a0a0"/></svg>
<span class="t cn" style="left:40.5px;top:475.5px;letter-spacing:-0.36px;">Channel 5</span>
<svg class="abs" style="left:189.5px;top:476px" width="9" height="11"><path d="M0 0v10.4l8.6-5.2z" fill="#a8a8a8"/></svg>
<svg class="abs" style="left:211.54999999999995px;top:474.5px" width="13" height="13" viewBox="-6.5 -6.5 13 13"><g fill="#b0b0b0"><rect x="-1.2" y="-6.15" width="2.4" height="3.6" transform="rotate(0)"/><rect x="-1.2" y="-6.15" width="2.4" height="3.6" transform="rotate(45)"/><rect x="-1.2" y="-6.15" width="2.4" height="3.6" transform="rotate(90)"/><rect x="-1.2" y="-6.15" width="2.4" height="3.6" transform="rotate(135)"/><rect x="-1.2" y="-6.15" width="2.4" height="3.6" transform="rotate(180)"/><rect x="-1.2" y="-6.15" width="2.4" height="3.6" transform="rotate(225)"/><rect x="-1.2" y="-6.15" width="2.4" height="3.6" transform="rotate(270)"/><rect x="-1.2" y="-6.15" width="2.4" height="3.6" transform="rotate(315)"/></g><circle r="3.15" fill="none" stroke="#b0b0b0" stroke-width="2.1"/></svg>
<div class="abs " style="left:0px;top:496px;width:238px;height:1px;background:#1c1c1c"></div>
<div class="abs crow2" style="top:497px"></div>
<svg class="abs" style="left:24px;top:497px" width="8" height="29"><path d="M6.5 0V9.5L2.5 13.5L6.5 17.5V29" stroke="#2a2a2a" stroke-width="1" fill="none"/><path d="M7.5 0V9.2L3.6 13.5L7.5 17.8V29" stroke="rgba(255,255,255,.06)" stroke-width="1" fill="none"/></svg>
<svg class="abs" style="left:7px;top:507px" width="12" height="7"><path d="M2 3.5h8" stroke="#a0a0a0" stroke-width="1"/><path d="M3.4 1.1L0.3 3.5l3.1 2.4zM8.6 1.1l3.1 2.4-3.1 2.4z" fill="#a0a0a0"/></svg>
<span class="t cn" style="left:40.5px;top:505.5px;letter-spacing:-0.36px;">Channel 6</span>
<svg class="abs" style="left:189.5px;top:506px" width="9" height="11"><path d="M0 0v10.4l8.6-5.2z" fill="#a8a8a8"/></svg>
<svg class="abs" style="left:211.54999999999995px;top:504.5px" width="13" height="13" viewBox="-6.5 -6.5 13 13"><g fill="#b0b0b0"><rect x="-1.2" y="-6.15" width="2.4" height="3.6" transform="rotate(0)"/><rect x="-1.2" y="-6.15" width="2.4" height="3.6" transform="rotate(45)"/><rect x="-1.2" y="-6.15" width="2.4" height="3.6" transform="rotate(90)"/><rect x="-1.2" y="-6.15" width="2.4" height="3.6" transform="rotate(135)"/><rect x="-1.2" y="-6.15" width="2.4" height="3.6" transform="rotate(180)"/><rect x="-1.2" y="-6.15" width="2.4" height="3.6" transform="rotate(225)"/><rect x="-1.2" y="-6.15" width="2.4" height="3.6" transform="rotate(270)"/><rect x="-1.2" y="-6.15" width="2.4" height="3.6" transform="rotate(315)"/></g><circle r="3.15" fill="none" stroke="#b0b0b0" stroke-width="2.1"/></svg>
<div class="abs " style="left:0px;top:526px;width:238px;height:1px;background:#1c1c1c"></div>
<div class="abs crow2" style="top:527px"></div>
<svg class="abs" style="left:24px;top:527px" width="8" height="29"><path d="M6.5 0V9.5L2.5 13.5L6.5 17.5V29" stroke="#2a2a2a" stroke-width="1" fill="none"/><path d="M7.5 0V9.2L3.6 13.5L7.5 17.8V29" stroke="rgba(255,255,255,.06)" stroke-width="1" fill="none"/></svg>
<svg class="abs" style="left:7px;top:537px" width="12" height="7"><path d="M2 3.5h8" stroke="#a0a0a0" stroke-width="1"/><path d="M3.4 1.1L0.3 3.5l3.1 2.4zM8.6 1.1l3.1 2.4-3.1 2.4z" fill="#a0a0a0"/></svg>
<span class="t cn" style="left:40.5px;top:535.5px;letter-spacing:-0.36px;">Channel 7</span>
<svg class="abs" style="left:189.5px;top:536px" width="9" height="11"><path d="M0 0v10.4l8.6-5.2z" fill="#a8a8a8"/></svg>
<svg class="abs" style="left:211.54999999999995px;top:534.5px" width="13" height="13" viewBox="-6.5 -6.5 13 13"><g fill="#b0b0b0"><rect x="-1.2" y="-6.15" width="2.4" height="3.6" transform="rotate(0)"/><rect x="-1.2" y="-6.15" width="2.4" height="3.6" transform="rotate(45)"/><rect x="-1.2" y="-6.15" width="2.4" height="3.6" transform="rotate(90)"/><rect x="-1.2" y="-6.15" width="2.4" height="3.6" transform="rotate(135)"/><rect x="-1.2" y="-6.15" width="2.4" height="3.6" transform="rotate(180)"/><rect x="-1.2" y="-6.15" width="2.4" height="3.6" transform="rotate(225)"/><rect x="-1.2" y="-6.15" width="2.4" height="3.6" transform="rotate(270)"/><rect x="-1.2" y="-6.15" width="2.4" height="3.6" transform="rotate(315)"/></g><circle r="3.15" fill="none" stroke="#b0b0b0" stroke-width="2.1"/></svg>
<div class="abs " style="left:0px;top:556px;width:238px;height:1px;background:#1c1c1c"></div>
<div class="abs " style="left:0px;top:636px;width:238px;height:1px;background:#0a0a0a"></div>
<div class="abs shdr" style="left:0px;top:637px;width:238px;height:28px;"></div>
<div class="abs " style="left:0px;top:665px;width:238px;height:2px;background:#0a0a0a"></div>
<div class="abs shdr" style="left:0px;top:667px;width:238px;height:28px;"></div>
<svg class="abs" style="left:9px;top:645px" width="9" height="13"><path d="M0.5 0.5v12l8-6z" fill="#d8d8d8"/></svg>
<span class="t sh" style="left:23px;top:646px;letter-spacing:-0.23px;">Analyzers</span>
<svg class="abs" style="left:9px;top:675px" width="9" height="13"><path d="M0.5 0.5v12l8-6z" fill="#d8d8d8"/></svg>
<span class="t sh" style="left:23px;top:676px;letter-spacing:-0.22px;">Decoded Protocols</span>
</div>
<svg class="abs" style="left:1168px;top:745px" width="16" height="16" viewBox="1168 745 16 16"><path d="M1171.8 757.7L1182.2 747.6M1176 757.7L1182.2 751.6M1180 757.7L1182.2 755.5" stroke="#383838" stroke-width="1.1"/><path d="M1172.6 758.5L1183 748.6M1176.8 758.5L1183 752.6M1180.8 758.5L1183 756.5" stroke="#999" stroke-width="0.6"/></svg>
</div>
</body></html>
